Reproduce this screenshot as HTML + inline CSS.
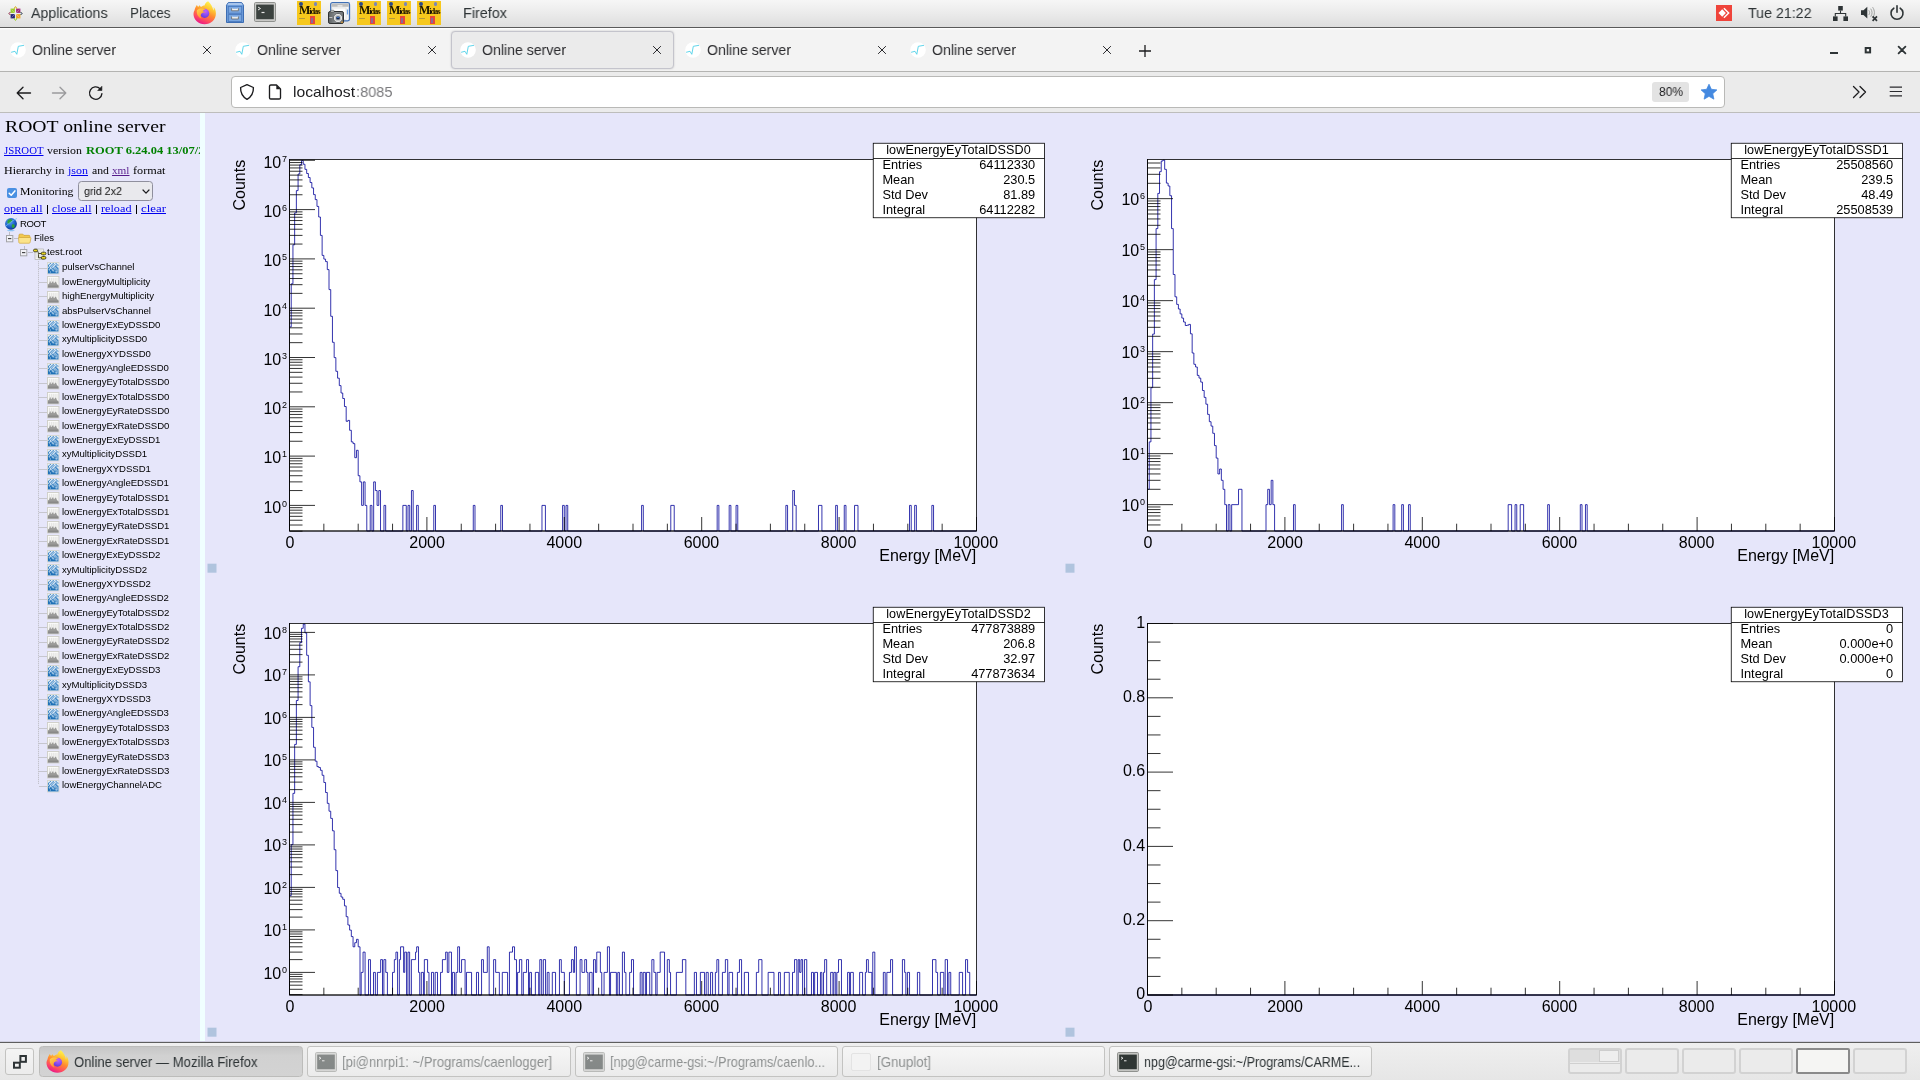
<!DOCTYPE html>
<html lang="en"><head><meta charset="utf-8"><title>Online server</title>
<style>
html,body{margin:0;padding:0;}
body{width:1920px;height:1080px;overflow:hidden;position:relative;background:#e6e6fa;
font-family:"Liberation Sans",sans-serif;}
.b{position:absolute;}
.a{position:absolute;overflow:visible;}
.t{position:absolute;white-space:pre;will-change:transform;}
.ls{font-family:"Liberation Sans",sans-serif;}
.lf{font-family:"Liberation Serif",serif;}
.lm{font-family:"Liberation Mono",monospace;}
</style></head><body>
<!-- content area -->
<div class="b" style="left:204.50px;top:113.00px;width:1715.50px;height:928.00px;background:#e6e6fa"></div>
<div class="b" style="left:0.00px;top:113.00px;width:200.00px;height:928.00px;background:#e6e6fa"></div>
<div class="b" style="left:200.00px;top:113.00px;width:4.50px;height:928.00px;background:#f0ffff"></div>
<div class="b" style="left:0;top:113px;width:200px;height:928px;overflow:hidden">
<span class="t lf" style="left:4.60px;top:5.16px;font-size:17.60px;line-height:17.60px;color:#000;transform:scaleX(1.1194);transform-origin:0 50%;">ROOT online server</span>
<span class="t lf" style="left:3.80px;top:32.62px;font-size:10.60px;line-height:10.60px;color:#0000ee;transform:scaleX(1.0161);transform-origin:0 50%;text-decoration:underline;text-decoration-thickness:0.8px;text-underline-offset:1.2px;">JSROOT</span>
<span class="t lf" style="left:47.00px;top:32.62px;font-size:10.60px;line-height:10.60px;color:#000;transform:scaleX(1.1216);transform-origin:0 50%;">version</span>
<span class="t lf" style="left:86.00px;top:32.62px;font-size:10.60px;line-height:10.60px;color:#008000;transform:scaleX(1.1789);transform-origin:0 50%;font-weight:700;">ROOT 6.24.04 13/07/2</span>
<span class="t lf" style="left:4.30px;top:52.62px;font-size:10.60px;line-height:10.60px;color:#000;transform:scaleX(1.1357);transform-origin:0 50%;">Hierarchy in</span>
<span class="t lf" style="left:67.80px;top:52.62px;font-size:10.60px;line-height:10.60px;color:#0000ee;transform:scaleX(1.1319);transform-origin:0 50%;text-decoration:underline;text-decoration-thickness:0.8px;text-underline-offset:1.2px;">json</span>
<span class="t lf" style="left:91.50px;top:52.62px;font-size:10.60px;line-height:10.60px;color:#000;transform:scaleX(1.1108);transform-origin:0 50%;">and</span>
<span class="t lf" style="left:112.00px;top:52.62px;font-size:10.60px;line-height:10.60px;color:#551a8b;transform:scaleX(1.0613);transform-origin:0 50%;text-decoration:underline;text-decoration-thickness:0.8px;text-underline-offset:1.2px;">xml</span>
<span class="t lf" style="left:133.00px;top:52.62px;font-size:10.60px;line-height:10.60px;color:#000;transform:scaleX(1.1503);transform-origin:0 50%;">format</span>
<div class="b" style="left:7.00px;top:74.60px;width:10.00px;height:10.00px;background:#4a90e2;border-radius:2px"></div>
<svg class="a" style="left:7px;top:74.60px" width="10" height="10" viewBox="0 0 10 10"><path d="M2.200 5.200l2 2 3.700-4.300" fill="none" stroke="#fff" stroke-width="1.500" stroke-linecap="round" stroke-linejoin="round"/></svg>
<span class="t lf" style="left:20.00px;top:73.72px;font-size:10.60px;line-height:10.60px;color:#000;transform:scaleX(1.1079);transform-origin:0 50%;">Monitoring</span>
<div class="b" style="left:78.20px;top:68.30px;width:74.70px;height:19.40px;background:#e9e9ed;border:1px solid #8f8f9d;border-radius:3.5px;box-sizing:border-box"></div>
<span class="t ls" style="left:84.00px;top:72.77px;font-size:11.50px;line-height:11.50px;color:#111;transform:scaleX(0.9288);transform-origin:0 50%;">grid 2x2</span>
<svg class="a" style="left:141.500px;top:75.50px" width="8" height="6" viewBox="0 0 8 6"><path d="M1 1l3 3.200 3-3.200" fill="none" stroke="#1c1c1e" stroke-width="1.200" stroke-linecap="round" stroke-linejoin="round"/></svg>
<span class="t lf" style="left:4.00px;top:90.72px;font-size:10.60px;line-height:10.60px;color:#0000ee;transform:scaleX(1.1374);transform-origin:0 50%;text-decoration:underline;text-decoration-thickness:0.8px;text-underline-offset:1.2px;">open all</span>
<div class="b" style="left:46.70px;top:91.80px;width:1.00px;height:9.20px;background:#000"></div>
<span class="t lf" style="left:52.00px;top:90.72px;font-size:10.60px;line-height:10.60px;color:#0000ee;transform:scaleX(1.1278);transform-origin:0 50%;text-decoration:underline;text-decoration-thickness:0.8px;text-underline-offset:1.2px;">close all</span>
<div class="b" style="left:95.70px;top:91.80px;width:1.00px;height:9.20px;background:#000"></div>
<span class="t lf" style="left:101.00px;top:90.72px;font-size:10.60px;line-height:10.60px;color:#0000ee;transform:scaleX(1.1516);transform-origin:0 50%;text-decoration:underline;text-decoration-thickness:0.8px;text-underline-offset:1.2px;">reload</span>
<div class="b" style="left:135.70px;top:91.80px;width:1.00px;height:9.20px;background:#000"></div>
<span class="t lf" style="left:141.00px;top:90.72px;font-size:10.60px;line-height:10.60px;color:#0000ee;transform:scaleX(1.2142);transform-origin:0 50%;text-decoration:underline;text-decoration-thickness:0.8px;text-underline-offset:1.2px;">clear</span>
<svg class="a" style="left:4px;top:103.50px" width="14" height="15" viewBox="0 0 14 15"><defs><radialGradient id="glb" cx="0.4" cy="0.35" r="0.7"><stop offset="0" stop-color="#5aa7f2"/><stop offset="0.6" stop-color="#1c5fc9"/><stop offset="1" stop-color="#0b2f8a"/></radialGradient></defs><ellipse cx="6.800" cy="13.600" rx="4" ry="0.700" fill="#6ab6f5" opacity="0.800"/><circle cx="7" cy="6.800" r="5.900" fill="url(#glb)"/><path d="M4.500 2.500c1.500-1 3-0.500 3.500 0.500s-0.500 2-1.500 2.500S5.500 7.500 4.500 7 3 5 3.500 4zM8 7.500c1-0.500 2.500 0 2.800 1s-0.800 2.500-1.800 2.500S7.500 9.500 8 7.500z" fill="#2fa33a"/><path d="M1.500 9.500C4 7 9 3 13 1.500" fill="none" stroke="#7cc4f7" stroke-width="0.800" opacity="0.900"/></svg>
<span class="t ls" style="left:19.80px;top:105.77px;font-size:9.60px;line-height:9.60px;color:#000;letter-spacing:-0.410px;">ROOT</span>
<div class="b" style="left:9.30px;top:118.50px;width:1.00px;height:4.00px;background:#bcbcc6"></div>
<div class="b" style="left:13.50px;top:125.30px;width:5.00px;height:1.00px;background:#bcbcc6"></div>
<svg class="a" style="left:6.00px;top:122.00px" width="8" height="8" viewBox="0 0 8 8"><rect x="0.500" y="0.500" width="6.300" height="6.300" fill="#f1f1f6" stroke="#a4a4a8" stroke-width="1"/><path d="M2 3.650h3.300" stroke="#111" stroke-width="0.900"/></svg>
<svg class="a" style="left:18px;top:120.00px" width="13" height="11.200" viewBox="0 0 14 12"><path d="M1 2.200c0-0.600 0.400-1 1-1h3.200l1.200 1.300h5.400c0.600 0 1 0.400 1 1V5H1z" fill="#f3c94e" stroke="#c99a27" stroke-width="0.700"/><path d="M0.600 4.800h12.600c0.500 0 0.800 0.400 0.700 0.800l-0.900 4.600c-0.100 0.500-0.500 0.800-1 0.800H1.900c-0.500 0-0.900-0.300-1-0.800z" fill="#fbe38a" stroke="#d1a431" stroke-width="0.700"/></svg>
<span class="t ls" style="left:34.00px;top:119.67px;font-size:9.60px;line-height:9.60px;color:#000;letter-spacing:-0.067px;">Files</span>
<div class="b" style="left:24.00px;top:132.50px;width:1.00px;height:3.50px;background:#bcbcc6"></div>
<div class="b" style="left:28.00px;top:139.30px;width:5.00px;height:1.00px;background:#bcbcc6"></div>
<svg class="a" style="left:20.30px;top:136.00px" width="8" height="8" viewBox="0 0 8 8"><rect x="0.500" y="0.500" width="6.300" height="6.300" fill="#f1f1f6" stroke="#a4a4a8" stroke-width="1"/><path d="M2 3.650h3.300" stroke="#111" stroke-width="0.900"/></svg>
<svg class="a" style="left:33px;top:134.70px" width="14" height="13" viewBox="0 0 14 13"><rect x="2" y="1" width="8.500" height="10.500" fill="#f3f3f0" stroke="#a8a8a4" stroke-width="0.600"/><path d="M3 3h6M3 5h6M3 7h6M3 9h6" stroke="#cfcfcb" stroke-width="0.600"/><path d="M2.500 2.500c3 0 3 3 3 4.500v2.800h4M5.500 5.500h4" fill="none" stroke="#3a3a20" stroke-width="0.900"/><rect x="0.500" y="1.200" width="4" height="2.600" rx="1.200" fill="#e9d51f" stroke="#2a2a10" stroke-width="0.800"/><rect x="8.300" y="4.200" width="4.600" height="2.600" rx="1.200" fill="#e9d51f" stroke="#2a2a10" stroke-width="0.800"/><rect x="8.300" y="8.500" width="4.600" height="2.600" rx="1.200" fill="#e9d51f" stroke="#2a2a10" stroke-width="0.800"/></svg>
<span class="t ls" style="left:47.00px;top:134.27px;font-size:9.60px;line-height:9.60px;color:#000;letter-spacing:0.040px;">test.root</span>
<div class="b" style="left:38.00px;top:147.50px;width:1.00px;height:523.50px;background:repeating-linear-gradient(#c2c2cc 0,#c2c2cc 1px,#dcdcec 1px,#dcdcec 2px)"></div>
<div class="b" style="left:39.00px;top:154.70px;width:7.50px;height:1.00px;background:#c6c6ce"></div>
<svg class="a" style="left:47.00px;top:149.00px" width="12.400" height="12.400" viewBox="0 0 13 13"><rect x="0.500" y="0.500" width="12" height="12" fill="#eef4fa" stroke="#d6d6ce" stroke-width="1"/><rect x="1" y="1" width="11" height="11" fill="#e4eef8"/><path d="M3 1h1v1h-1zM6 1h1v1h-1zM9 1h1v1h-1zM2 2h1v1h-1zM5 2h1v1h-1zM7 2h1v1h-1zM10 2h1v1h-1zM1 3h1v1h-1zM4 3h1v1h-1zM6 3h1v1h-1zM9 3h1v1h-1zM11 3h1v1h-1zM1 4h1v1h-1zM3 4h1v1h-1zM5 4h1v1h-1zM8 4h1v1h-1zM9 4h1v1h-1zM2 5h1v1h-1zM4 5h1v1h-1zM7 5h1v1h-1zM9 5h1v1h-1zM10 5h1v1h-1zM1 6h1v1h-1zM2 6h1v1h-1zM5 6h1v1h-1zM6 6h1v1h-1zM8 6h1v1h-1zM10 6h1v1h-1zM11 6h1v1h-1zM1 7h1v1h-1zM3 7h1v1h-1zM4 7h1v1h-1zM6 7h1v1h-1zM7 7h1v1h-1zM9 7h1v1h-1zM11 7h1v1h-1z" fill="#2d7cc0"/><rect x="1" y="8" width="11" height="4" fill="#1e70b6"/><path d="M2 8h1v1h-1zM5 8h2v1h-2zM8 9h1v1h-1zM10 8h1v2h-1zM9 10h2v1h-2zM3 10h1v1h-1zM6 9h1v1h-1z" fill="#cfe3f4"/></svg>
<span class="t ls" style="left:61.50px;top:149.37px;font-size:9.60px;line-height:9.60px;color:#000;letter-spacing:-0.042px;">pulserVsChannel</span>
<div class="b" style="left:39.00px;top:169.09px;width:7.50px;height:1.00px;background:#c6c6ce"></div>
<svg class="a" style="left:47.00px;top:163.39px" width="12.400" height="12.400" viewBox="0 0 13 13"><rect x="0.500" y="0.500" width="12" height="12" fill="#fbfbfa" stroke="#cfcfc9" stroke-width="1"/><path d="M2.500 2v6M4.500 2v5M6.500 2v6M8.500 2v5M10.500 2v6" stroke="#dcdcd8" stroke-width="0.900"/><path d="M1 12V9L2.300 7.800 3.300 5 4.300 7.600 5.300 6.600 6.300 5.200 7.300 7.800 8.300 6.500 9.300 5.800 10.300 8.200 12 10V12z" fill="#9a9a98"/><rect x="1" y="10" width="11" height="2" fill="#8a8a88"/></svg>
<span class="t ls" style="left:61.50px;top:163.76px;font-size:9.60px;line-height:9.60px;color:#000;letter-spacing:-0.036px;">lowEnergyMultiplicity</span>
<div class="b" style="left:39.00px;top:183.48px;width:7.50px;height:1.00px;background:#c6c6ce"></div>
<svg class="a" style="left:47.00px;top:177.78px" width="12.400" height="12.400" viewBox="0 0 13 13"><rect x="0.500" y="0.500" width="12" height="12" fill="#fbfbfa" stroke="#cfcfc9" stroke-width="1"/><path d="M2.500 2v6M4.500 2v5M6.500 2v6M8.500 2v5M10.500 2v6" stroke="#dcdcd8" stroke-width="0.900"/><path d="M1 12V9L2.300 7.800 3.300 5 4.300 7.600 5.300 6.600 6.300 5.200 7.300 7.800 8.300 6.500 9.300 5.800 10.300 8.200 12 10V12z" fill="#9a9a98"/><rect x="1" y="10" width="11" height="2" fill="#8a8a88"/></svg>
<span class="t ls" style="left:61.50px;top:178.15px;font-size:9.60px;line-height:9.60px;color:#000;letter-spacing:-0.035px;">highEnergyMultiplicity</span>
<div class="b" style="left:39.00px;top:197.87px;width:7.50px;height:1.00px;background:#c6c6ce"></div>
<svg class="a" style="left:47.00px;top:192.17px" width="12.400" height="12.400" viewBox="0 0 13 13"><rect x="0.500" y="0.500" width="12" height="12" fill="#eef4fa" stroke="#d6d6ce" stroke-width="1"/><rect x="1" y="1" width="11" height="11" fill="#e4eef8"/><path d="M3 1h1v1h-1zM6 1h1v1h-1zM9 1h1v1h-1zM2 2h1v1h-1zM5 2h1v1h-1zM7 2h1v1h-1zM10 2h1v1h-1zM1 3h1v1h-1zM4 3h1v1h-1zM6 3h1v1h-1zM9 3h1v1h-1zM11 3h1v1h-1zM1 4h1v1h-1zM3 4h1v1h-1zM5 4h1v1h-1zM8 4h1v1h-1zM9 4h1v1h-1zM2 5h1v1h-1zM4 5h1v1h-1zM7 5h1v1h-1zM9 5h1v1h-1zM10 5h1v1h-1zM1 6h1v1h-1zM2 6h1v1h-1zM5 6h1v1h-1zM6 6h1v1h-1zM8 6h1v1h-1zM10 6h1v1h-1zM11 6h1v1h-1zM1 7h1v1h-1zM3 7h1v1h-1zM4 7h1v1h-1zM6 7h1v1h-1zM7 7h1v1h-1zM9 7h1v1h-1zM11 7h1v1h-1z" fill="#2d7cc0"/><rect x="1" y="8" width="11" height="4" fill="#1e70b6"/><path d="M2 8h1v1h-1zM5 8h2v1h-2zM8 9h1v1h-1zM10 8h1v2h-1zM9 10h2v1h-2zM3 10h1v1h-1zM6 9h1v1h-1z" fill="#cfe3f4"/></svg>
<span class="t ls" style="left:61.50px;top:192.54px;font-size:9.60px;line-height:9.60px;color:#000;letter-spacing:-0.042px;">absPulserVsChannel</span>
<div class="b" style="left:39.00px;top:212.26px;width:7.50px;height:1.00px;background:#c6c6ce"></div>
<svg class="a" style="left:47.00px;top:206.56px" width="12.400" height="12.400" viewBox="0 0 13 13"><rect x="0.500" y="0.500" width="12" height="12" fill="#eef4fa" stroke="#d6d6ce" stroke-width="1"/><rect x="1" y="1" width="11" height="11" fill="#e4eef8"/><path d="M3 1h1v1h-1zM6 1h1v1h-1zM9 1h1v1h-1zM2 2h1v1h-1zM5 2h1v1h-1zM7 2h1v1h-1zM10 2h1v1h-1zM1 3h1v1h-1zM4 3h1v1h-1zM6 3h1v1h-1zM9 3h1v1h-1zM11 3h1v1h-1zM1 4h1v1h-1zM3 4h1v1h-1zM5 4h1v1h-1zM8 4h1v1h-1zM9 4h1v1h-1zM2 5h1v1h-1zM4 5h1v1h-1zM7 5h1v1h-1zM9 5h1v1h-1zM10 5h1v1h-1zM1 6h1v1h-1zM2 6h1v1h-1zM5 6h1v1h-1zM6 6h1v1h-1zM8 6h1v1h-1zM10 6h1v1h-1zM11 6h1v1h-1zM1 7h1v1h-1zM3 7h1v1h-1zM4 7h1v1h-1zM6 7h1v1h-1zM7 7h1v1h-1zM9 7h1v1h-1zM11 7h1v1h-1z" fill="#2d7cc0"/><rect x="1" y="8" width="11" height="4" fill="#1e70b6"/><path d="M2 8h1v1h-1zM5 8h2v1h-2zM8 9h1v1h-1zM10 8h1v2h-1zM9 10h2v1h-2zM3 10h1v1h-1zM6 9h1v1h-1z" fill="#cfe3f4"/></svg>
<span class="t ls" style="left:61.50px;top:206.93px;font-size:9.60px;line-height:9.60px;color:#000;letter-spacing:-0.047px;">lowEnergyExEyDSSD0</span>
<div class="b" style="left:39.00px;top:226.64px;width:7.50px;height:1.00px;background:#c6c6ce"></div>
<svg class="a" style="left:47.00px;top:220.94px" width="12.400" height="12.400" viewBox="0 0 13 13"><rect x="0.500" y="0.500" width="12" height="12" fill="#eef4fa" stroke="#d6d6ce" stroke-width="1"/><rect x="1" y="1" width="11" height="11" fill="#e4eef8"/><path d="M3 1h1v1h-1zM6 1h1v1h-1zM9 1h1v1h-1zM2 2h1v1h-1zM5 2h1v1h-1zM7 2h1v1h-1zM10 2h1v1h-1zM1 3h1v1h-1zM4 3h1v1h-1zM6 3h1v1h-1zM9 3h1v1h-1zM11 3h1v1h-1zM1 4h1v1h-1zM3 4h1v1h-1zM5 4h1v1h-1zM8 4h1v1h-1zM9 4h1v1h-1zM2 5h1v1h-1zM4 5h1v1h-1zM7 5h1v1h-1zM9 5h1v1h-1zM10 5h1v1h-1zM1 6h1v1h-1zM2 6h1v1h-1zM5 6h1v1h-1zM6 6h1v1h-1zM8 6h1v1h-1zM10 6h1v1h-1zM11 6h1v1h-1zM1 7h1v1h-1zM3 7h1v1h-1zM4 7h1v1h-1zM6 7h1v1h-1zM7 7h1v1h-1zM9 7h1v1h-1zM11 7h1v1h-1z" fill="#2d7cc0"/><rect x="1" y="8" width="11" height="4" fill="#1e70b6"/><path d="M2 8h1v1h-1zM5 8h2v1h-2zM8 9h1v1h-1zM10 8h1v2h-1zM9 10h2v1h-2zM3 10h1v1h-1zM6 9h1v1h-1z" fill="#cfe3f4"/></svg>
<span class="t ls" style="left:61.50px;top:221.32px;font-size:9.60px;line-height:9.60px;color:#000;letter-spacing:-0.038px;">xyMultiplicityDSSD0</span>
<div class="b" style="left:39.00px;top:241.03px;width:7.50px;height:1.00px;background:#c6c6ce"></div>
<svg class="a" style="left:47.00px;top:235.33px" width="12.400" height="12.400" viewBox="0 0 13 13"><rect x="0.500" y="0.500" width="12" height="12" fill="#eef4fa" stroke="#d6d6ce" stroke-width="1"/><rect x="1" y="1" width="11" height="11" fill="#e4eef8"/><path d="M3 1h1v1h-1zM6 1h1v1h-1zM9 1h1v1h-1zM2 2h1v1h-1zM5 2h1v1h-1zM7 2h1v1h-1zM10 2h1v1h-1zM1 3h1v1h-1zM4 3h1v1h-1zM6 3h1v1h-1zM9 3h1v1h-1zM11 3h1v1h-1zM1 4h1v1h-1zM3 4h1v1h-1zM5 4h1v1h-1zM8 4h1v1h-1zM9 4h1v1h-1zM2 5h1v1h-1zM4 5h1v1h-1zM7 5h1v1h-1zM9 5h1v1h-1zM10 5h1v1h-1zM1 6h1v1h-1zM2 6h1v1h-1zM5 6h1v1h-1zM6 6h1v1h-1zM8 6h1v1h-1zM10 6h1v1h-1zM11 6h1v1h-1zM1 7h1v1h-1zM3 7h1v1h-1zM4 7h1v1h-1zM6 7h1v1h-1zM7 7h1v1h-1zM9 7h1v1h-1zM11 7h1v1h-1z" fill="#2d7cc0"/><rect x="1" y="8" width="11" height="4" fill="#1e70b6"/><path d="M2 8h1v1h-1zM5 8h2v1h-2zM8 9h1v1h-1zM10 8h1v2h-1zM9 10h2v1h-2zM3 10h1v1h-1zM6 9h1v1h-1z" fill="#cfe3f4"/></svg>
<span class="t ls" style="left:61.50px;top:235.71px;font-size:9.60px;line-height:9.60px;color:#000;letter-spacing:-0.048px;">lowEnergyXYDSSD0</span>
<div class="b" style="left:39.00px;top:255.42px;width:7.50px;height:1.00px;background:#c6c6ce"></div>
<svg class="a" style="left:47.00px;top:249.72px" width="12.400" height="12.400" viewBox="0 0 13 13"><rect x="0.500" y="0.500" width="12" height="12" fill="#eef4fa" stroke="#d6d6ce" stroke-width="1"/><rect x="1" y="1" width="11" height="11" fill="#e4eef8"/><path d="M3 1h1v1h-1zM6 1h1v1h-1zM9 1h1v1h-1zM2 2h1v1h-1zM5 2h1v1h-1zM7 2h1v1h-1zM10 2h1v1h-1zM1 3h1v1h-1zM4 3h1v1h-1zM6 3h1v1h-1zM9 3h1v1h-1zM11 3h1v1h-1zM1 4h1v1h-1zM3 4h1v1h-1zM5 4h1v1h-1zM8 4h1v1h-1zM9 4h1v1h-1zM2 5h1v1h-1zM4 5h1v1h-1zM7 5h1v1h-1zM9 5h1v1h-1zM10 5h1v1h-1zM1 6h1v1h-1zM2 6h1v1h-1zM5 6h1v1h-1zM6 6h1v1h-1zM8 6h1v1h-1zM10 6h1v1h-1zM11 6h1v1h-1zM1 7h1v1h-1zM3 7h1v1h-1zM4 7h1v1h-1zM6 7h1v1h-1zM7 7h1v1h-1zM9 7h1v1h-1zM11 7h1v1h-1z" fill="#2d7cc0"/><rect x="1" y="8" width="11" height="4" fill="#1e70b6"/><path d="M2 8h1v1h-1zM5 8h2v1h-2zM8 9h1v1h-1zM10 8h1v2h-1zM9 10h2v1h-2zM3 10h1v1h-1zM6 9h1v1h-1z" fill="#cfe3f4"/></svg>
<span class="t ls" style="left:61.50px;top:250.10px;font-size:9.60px;line-height:9.60px;color:#000;letter-spacing:-0.045px;">lowEnergyAngleEDSSD0</span>
<div class="b" style="left:39.00px;top:269.81px;width:7.50px;height:1.00px;background:#c6c6ce"></div>
<svg class="a" style="left:47.00px;top:264.11px" width="12.400" height="12.400" viewBox="0 0 13 13"><rect x="0.500" y="0.500" width="12" height="12" fill="#fbfbfa" stroke="#cfcfc9" stroke-width="1"/><path d="M2.500 2v6M4.500 2v5M6.500 2v6M8.500 2v5M10.500 2v6" stroke="#dcdcd8" stroke-width="0.900"/><path d="M1 12V9L2.300 7.800 3.300 5 4.300 7.600 5.300 6.600 6.300 5.200 7.300 7.800 8.300 6.500 9.300 5.800 10.300 8.200 12 10V12z" fill="#9a9a98"/><rect x="1" y="10" width="11" height="2" fill="#8a8a88"/></svg>
<span class="t ls" style="left:61.50px;top:264.48px;font-size:9.60px;line-height:9.60px;color:#000;letter-spacing:-0.043px;">lowEnergyEyTotalDSSD0</span>
<div class="b" style="left:39.00px;top:284.20px;width:7.50px;height:1.00px;background:#c6c6ce"></div>
<svg class="a" style="left:47.00px;top:278.50px" width="12.400" height="12.400" viewBox="0 0 13 13"><rect x="0.500" y="0.500" width="12" height="12" fill="#fbfbfa" stroke="#cfcfc9" stroke-width="1"/><path d="M2.500 2v6M4.500 2v5M6.500 2v6M8.500 2v5M10.500 2v6" stroke="#dcdcd8" stroke-width="0.900"/><path d="M1 12V9L2.300 7.800 3.300 5 4.300 7.600 5.300 6.600 6.300 5.200 7.300 7.800 8.300 6.500 9.300 5.800 10.300 8.200 12 10V12z" fill="#9a9a98"/><rect x="1" y="10" width="11" height="2" fill="#8a8a88"/></svg>
<span class="t ls" style="left:61.50px;top:278.87px;font-size:9.60px;line-height:9.60px;color:#000;letter-spacing:-0.043px;">lowEnergyExTotalDSSD0</span>
<div class="b" style="left:39.00px;top:298.59px;width:7.50px;height:1.00px;background:#c6c6ce"></div>
<svg class="a" style="left:47.00px;top:292.89px" width="12.400" height="12.400" viewBox="0 0 13 13"><rect x="0.500" y="0.500" width="12" height="12" fill="#fbfbfa" stroke="#cfcfc9" stroke-width="1"/><path d="M2.500 2v6M4.500 2v5M6.500 2v6M8.500 2v5M10.500 2v6" stroke="#dcdcd8" stroke-width="0.900"/><path d="M1 12V9L2.300 7.800 3.300 5 4.300 7.600 5.300 6.600 6.300 5.200 7.300 7.800 8.300 6.500 9.300 5.800 10.300 8.200 12 10V12z" fill="#9a9a98"/><rect x="1" y="10" width="11" height="2" fill="#8a8a88"/></svg>
<span class="t ls" style="left:61.50px;top:293.26px;font-size:9.60px;line-height:9.60px;color:#000;letter-spacing:-0.046px;">lowEnergyEyRateDSSD0</span>
<div class="b" style="left:39.00px;top:312.98px;width:7.50px;height:1.00px;background:#c6c6ce"></div>
<svg class="a" style="left:47.00px;top:307.28px" width="12.400" height="12.400" viewBox="0 0 13 13"><rect x="0.500" y="0.500" width="12" height="12" fill="#fbfbfa" stroke="#cfcfc9" stroke-width="1"/><path d="M2.500 2v6M4.500 2v5M6.500 2v6M8.500 2v5M10.500 2v6" stroke="#dcdcd8" stroke-width="0.900"/><path d="M1 12V9L2.300 7.800 3.300 5 4.300 7.600 5.300 6.600 6.300 5.200 7.300 7.800 8.300 6.500 9.300 5.800 10.300 8.200 12 10V12z" fill="#9a9a98"/><rect x="1" y="10" width="11" height="2" fill="#8a8a88"/></svg>
<span class="t ls" style="left:61.50px;top:307.65px;font-size:9.60px;line-height:9.60px;color:#000;letter-spacing:-0.046px;">lowEnergyExRateDSSD0</span>
<div class="b" style="left:39.00px;top:327.37px;width:7.50px;height:1.00px;background:#c6c6ce"></div>
<svg class="a" style="left:47.00px;top:321.67px" width="12.400" height="12.400" viewBox="0 0 13 13"><rect x="0.500" y="0.500" width="12" height="12" fill="#eef4fa" stroke="#d6d6ce" stroke-width="1"/><rect x="1" y="1" width="11" height="11" fill="#e4eef8"/><path d="M3 1h1v1h-1zM6 1h1v1h-1zM9 1h1v1h-1zM2 2h1v1h-1zM5 2h1v1h-1zM7 2h1v1h-1zM10 2h1v1h-1zM1 3h1v1h-1zM4 3h1v1h-1zM6 3h1v1h-1zM9 3h1v1h-1zM11 3h1v1h-1zM1 4h1v1h-1zM3 4h1v1h-1zM5 4h1v1h-1zM8 4h1v1h-1zM9 4h1v1h-1zM2 5h1v1h-1zM4 5h1v1h-1zM7 5h1v1h-1zM9 5h1v1h-1zM10 5h1v1h-1zM1 6h1v1h-1zM2 6h1v1h-1zM5 6h1v1h-1zM6 6h1v1h-1zM8 6h1v1h-1zM10 6h1v1h-1zM11 6h1v1h-1zM1 7h1v1h-1zM3 7h1v1h-1zM4 7h1v1h-1zM6 7h1v1h-1zM7 7h1v1h-1zM9 7h1v1h-1zM11 7h1v1h-1z" fill="#2d7cc0"/><rect x="1" y="8" width="11" height="4" fill="#1e70b6"/><path d="M2 8h1v1h-1zM5 8h2v1h-2zM8 9h1v1h-1zM10 8h1v2h-1zM9 10h2v1h-2zM3 10h1v1h-1zM6 9h1v1h-1z" fill="#cfe3f4"/></svg>
<span class="t ls" style="left:61.50px;top:322.04px;font-size:9.60px;line-height:9.60px;color:#000;letter-spacing:-0.047px;">lowEnergyExEyDSSD1</span>
<div class="b" style="left:39.00px;top:341.76px;width:7.50px;height:1.00px;background:#c6c6ce"></div>
<svg class="a" style="left:47.00px;top:336.06px" width="12.400" height="12.400" viewBox="0 0 13 13"><rect x="0.500" y="0.500" width="12" height="12" fill="#eef4fa" stroke="#d6d6ce" stroke-width="1"/><rect x="1" y="1" width="11" height="11" fill="#e4eef8"/><path d="M3 1h1v1h-1zM6 1h1v1h-1zM9 1h1v1h-1zM2 2h1v1h-1zM5 2h1v1h-1zM7 2h1v1h-1zM10 2h1v1h-1zM1 3h1v1h-1zM4 3h1v1h-1zM6 3h1v1h-1zM9 3h1v1h-1zM11 3h1v1h-1zM1 4h1v1h-1zM3 4h1v1h-1zM5 4h1v1h-1zM8 4h1v1h-1zM9 4h1v1h-1zM2 5h1v1h-1zM4 5h1v1h-1zM7 5h1v1h-1zM9 5h1v1h-1zM10 5h1v1h-1zM1 6h1v1h-1zM2 6h1v1h-1zM5 6h1v1h-1zM6 6h1v1h-1zM8 6h1v1h-1zM10 6h1v1h-1zM11 6h1v1h-1zM1 7h1v1h-1zM3 7h1v1h-1zM4 7h1v1h-1zM6 7h1v1h-1zM7 7h1v1h-1zM9 7h1v1h-1zM11 7h1v1h-1z" fill="#2d7cc0"/><rect x="1" y="8" width="11" height="4" fill="#1e70b6"/><path d="M2 8h1v1h-1zM5 8h2v1h-2zM8 9h1v1h-1zM10 8h1v2h-1zM9 10h2v1h-2zM3 10h1v1h-1zM6 9h1v1h-1z" fill="#cfe3f4"/></svg>
<span class="t ls" style="left:61.50px;top:336.43px;font-size:9.60px;line-height:9.60px;color:#000;letter-spacing:-0.038px;">xyMultiplicityDSSD1</span>
<div class="b" style="left:39.00px;top:356.14px;width:7.50px;height:1.00px;background:#c6c6ce"></div>
<svg class="a" style="left:47.00px;top:350.44px" width="12.400" height="12.400" viewBox="0 0 13 13"><rect x="0.500" y="0.500" width="12" height="12" fill="#eef4fa" stroke="#d6d6ce" stroke-width="1"/><rect x="1" y="1" width="11" height="11" fill="#e4eef8"/><path d="M3 1h1v1h-1zM6 1h1v1h-1zM9 1h1v1h-1zM2 2h1v1h-1zM5 2h1v1h-1zM7 2h1v1h-1zM10 2h1v1h-1zM1 3h1v1h-1zM4 3h1v1h-1zM6 3h1v1h-1zM9 3h1v1h-1zM11 3h1v1h-1zM1 4h1v1h-1zM3 4h1v1h-1zM5 4h1v1h-1zM8 4h1v1h-1zM9 4h1v1h-1zM2 5h1v1h-1zM4 5h1v1h-1zM7 5h1v1h-1zM9 5h1v1h-1zM10 5h1v1h-1zM1 6h1v1h-1zM2 6h1v1h-1zM5 6h1v1h-1zM6 6h1v1h-1zM8 6h1v1h-1zM10 6h1v1h-1zM11 6h1v1h-1zM1 7h1v1h-1zM3 7h1v1h-1zM4 7h1v1h-1zM6 7h1v1h-1zM7 7h1v1h-1zM9 7h1v1h-1zM11 7h1v1h-1z" fill="#2d7cc0"/><rect x="1" y="8" width="11" height="4" fill="#1e70b6"/><path d="M2 8h1v1h-1zM5 8h2v1h-2zM8 9h1v1h-1zM10 8h1v2h-1zM9 10h2v1h-2zM3 10h1v1h-1zM6 9h1v1h-1z" fill="#cfe3f4"/></svg>
<span class="t ls" style="left:61.50px;top:350.82px;font-size:9.60px;line-height:9.60px;color:#000;letter-spacing:-0.048px;">lowEnergyXYDSSD1</span>
<div class="b" style="left:39.00px;top:370.53px;width:7.50px;height:1.00px;background:#c6c6ce"></div>
<svg class="a" style="left:47.00px;top:364.83px" width="12.400" height="12.400" viewBox="0 0 13 13"><rect x="0.500" y="0.500" width="12" height="12" fill="#eef4fa" stroke="#d6d6ce" stroke-width="1"/><rect x="1" y="1" width="11" height="11" fill="#e4eef8"/><path d="M3 1h1v1h-1zM6 1h1v1h-1zM9 1h1v1h-1zM2 2h1v1h-1zM5 2h1v1h-1zM7 2h1v1h-1zM10 2h1v1h-1zM1 3h1v1h-1zM4 3h1v1h-1zM6 3h1v1h-1zM9 3h1v1h-1zM11 3h1v1h-1zM1 4h1v1h-1zM3 4h1v1h-1zM5 4h1v1h-1zM8 4h1v1h-1zM9 4h1v1h-1zM2 5h1v1h-1zM4 5h1v1h-1zM7 5h1v1h-1zM9 5h1v1h-1zM10 5h1v1h-1zM1 6h1v1h-1zM2 6h1v1h-1zM5 6h1v1h-1zM6 6h1v1h-1zM8 6h1v1h-1zM10 6h1v1h-1zM11 6h1v1h-1zM1 7h1v1h-1zM3 7h1v1h-1zM4 7h1v1h-1zM6 7h1v1h-1zM7 7h1v1h-1zM9 7h1v1h-1zM11 7h1v1h-1z" fill="#2d7cc0"/><rect x="1" y="8" width="11" height="4" fill="#1e70b6"/><path d="M2 8h1v1h-1zM5 8h2v1h-2zM8 9h1v1h-1zM10 8h1v2h-1zM9 10h2v1h-2zM3 10h1v1h-1zM6 9h1v1h-1z" fill="#cfe3f4"/></svg>
<span class="t ls" style="left:61.50px;top:365.21px;font-size:9.60px;line-height:9.60px;color:#000;letter-spacing:-0.045px;">lowEnergyAngleEDSSD1</span>
<div class="b" style="left:39.00px;top:384.92px;width:7.50px;height:1.00px;background:#c6c6ce"></div>
<svg class="a" style="left:47.00px;top:379.22px" width="12.400" height="12.400" viewBox="0 0 13 13"><rect x="0.500" y="0.500" width="12" height="12" fill="#fbfbfa" stroke="#cfcfc9" stroke-width="1"/><path d="M2.500 2v6M4.500 2v5M6.500 2v6M8.500 2v5M10.500 2v6" stroke="#dcdcd8" stroke-width="0.900"/><path d="M1 12V9L2.300 7.800 3.300 5 4.300 7.600 5.300 6.600 6.300 5.200 7.300 7.800 8.300 6.500 9.300 5.800 10.300 8.200 12 10V12z" fill="#9a9a98"/><rect x="1" y="10" width="11" height="2" fill="#8a8a88"/></svg>
<span class="t ls" style="left:61.50px;top:379.60px;font-size:9.60px;line-height:9.60px;color:#000;letter-spacing:-0.043px;">lowEnergyEyTotalDSSD1</span>
<div class="b" style="left:39.00px;top:399.31px;width:7.50px;height:1.00px;background:#c6c6ce"></div>
<svg class="a" style="left:47.00px;top:393.61px" width="12.400" height="12.400" viewBox="0 0 13 13"><rect x="0.500" y="0.500" width="12" height="12" fill="#fbfbfa" stroke="#cfcfc9" stroke-width="1"/><path d="M2.500 2v6M4.500 2v5M6.500 2v6M8.500 2v5M10.500 2v6" stroke="#dcdcd8" stroke-width="0.900"/><path d="M1 12V9L2.300 7.800 3.300 5 4.300 7.600 5.300 6.600 6.300 5.200 7.300 7.800 8.300 6.500 9.300 5.800 10.300 8.200 12 10V12z" fill="#9a9a98"/><rect x="1" y="10" width="11" height="2" fill="#8a8a88"/></svg>
<span class="t ls" style="left:61.50px;top:393.98px;font-size:9.60px;line-height:9.60px;color:#000;letter-spacing:-0.043px;">lowEnergyExTotalDSSD1</span>
<div class="b" style="left:39.00px;top:413.70px;width:7.50px;height:1.00px;background:#c6c6ce"></div>
<svg class="a" style="left:47.00px;top:408.00px" width="12.400" height="12.400" viewBox="0 0 13 13"><rect x="0.500" y="0.500" width="12" height="12" fill="#fbfbfa" stroke="#cfcfc9" stroke-width="1"/><path d="M2.500 2v6M4.500 2v5M6.500 2v6M8.500 2v5M10.500 2v6" stroke="#dcdcd8" stroke-width="0.900"/><path d="M1 12V9L2.300 7.800 3.300 5 4.300 7.600 5.300 6.600 6.300 5.200 7.300 7.800 8.300 6.500 9.300 5.800 10.300 8.200 12 10V12z" fill="#9a9a98"/><rect x="1" y="10" width="11" height="2" fill="#8a8a88"/></svg>
<span class="t ls" style="left:61.50px;top:408.37px;font-size:9.60px;line-height:9.60px;color:#000;letter-spacing:-0.046px;">lowEnergyEyRateDSSD1</span>
<div class="b" style="left:39.00px;top:428.09px;width:7.50px;height:1.00px;background:#c6c6ce"></div>
<svg class="a" style="left:47.00px;top:422.39px" width="12.400" height="12.400" viewBox="0 0 13 13"><rect x="0.500" y="0.500" width="12" height="12" fill="#fbfbfa" stroke="#cfcfc9" stroke-width="1"/><path d="M2.500 2v6M4.500 2v5M6.500 2v6M8.500 2v5M10.500 2v6" stroke="#dcdcd8" stroke-width="0.900"/><path d="M1 12V9L2.300 7.800 3.300 5 4.300 7.600 5.300 6.600 6.300 5.200 7.300 7.800 8.300 6.500 9.300 5.800 10.300 8.200 12 10V12z" fill="#9a9a98"/><rect x="1" y="10" width="11" height="2" fill="#8a8a88"/></svg>
<span class="t ls" style="left:61.50px;top:422.76px;font-size:9.60px;line-height:9.60px;color:#000;letter-spacing:-0.046px;">lowEnergyExRateDSSD1</span>
<div class="b" style="left:39.00px;top:442.48px;width:7.50px;height:1.00px;background:#c6c6ce"></div>
<svg class="a" style="left:47.00px;top:436.78px" width="12.400" height="12.400" viewBox="0 0 13 13"><rect x="0.500" y="0.500" width="12" height="12" fill="#eef4fa" stroke="#d6d6ce" stroke-width="1"/><rect x="1" y="1" width="11" height="11" fill="#e4eef8"/><path d="M3 1h1v1h-1zM6 1h1v1h-1zM9 1h1v1h-1zM2 2h1v1h-1zM5 2h1v1h-1zM7 2h1v1h-1zM10 2h1v1h-1zM1 3h1v1h-1zM4 3h1v1h-1zM6 3h1v1h-1zM9 3h1v1h-1zM11 3h1v1h-1zM1 4h1v1h-1zM3 4h1v1h-1zM5 4h1v1h-1zM8 4h1v1h-1zM9 4h1v1h-1zM2 5h1v1h-1zM4 5h1v1h-1zM7 5h1v1h-1zM9 5h1v1h-1zM10 5h1v1h-1zM1 6h1v1h-1zM2 6h1v1h-1zM5 6h1v1h-1zM6 6h1v1h-1zM8 6h1v1h-1zM10 6h1v1h-1zM11 6h1v1h-1zM1 7h1v1h-1zM3 7h1v1h-1zM4 7h1v1h-1zM6 7h1v1h-1zM7 7h1v1h-1zM9 7h1v1h-1zM11 7h1v1h-1z" fill="#2d7cc0"/><rect x="1" y="8" width="11" height="4" fill="#1e70b6"/><path d="M2 8h1v1h-1zM5 8h2v1h-2zM8 9h1v1h-1zM10 8h1v2h-1zM9 10h2v1h-2zM3 10h1v1h-1zM6 9h1v1h-1z" fill="#cfe3f4"/></svg>
<span class="t ls" style="left:61.50px;top:437.15px;font-size:9.60px;line-height:9.60px;color:#000;letter-spacing:-0.047px;">lowEnergyExEyDSSD2</span>
<div class="b" style="left:39.00px;top:456.87px;width:7.50px;height:1.00px;background:#c6c6ce"></div>
<svg class="a" style="left:47.00px;top:451.17px" width="12.400" height="12.400" viewBox="0 0 13 13"><rect x="0.500" y="0.500" width="12" height="12" fill="#eef4fa" stroke="#d6d6ce" stroke-width="1"/><rect x="1" y="1" width="11" height="11" fill="#e4eef8"/><path d="M3 1h1v1h-1zM6 1h1v1h-1zM9 1h1v1h-1zM2 2h1v1h-1zM5 2h1v1h-1zM7 2h1v1h-1zM10 2h1v1h-1zM1 3h1v1h-1zM4 3h1v1h-1zM6 3h1v1h-1zM9 3h1v1h-1zM11 3h1v1h-1zM1 4h1v1h-1zM3 4h1v1h-1zM5 4h1v1h-1zM8 4h1v1h-1zM9 4h1v1h-1zM2 5h1v1h-1zM4 5h1v1h-1zM7 5h1v1h-1zM9 5h1v1h-1zM10 5h1v1h-1zM1 6h1v1h-1zM2 6h1v1h-1zM5 6h1v1h-1zM6 6h1v1h-1zM8 6h1v1h-1zM10 6h1v1h-1zM11 6h1v1h-1zM1 7h1v1h-1zM3 7h1v1h-1zM4 7h1v1h-1zM6 7h1v1h-1zM7 7h1v1h-1zM9 7h1v1h-1zM11 7h1v1h-1z" fill="#2d7cc0"/><rect x="1" y="8" width="11" height="4" fill="#1e70b6"/><path d="M2 8h1v1h-1zM5 8h2v1h-2zM8 9h1v1h-1zM10 8h1v2h-1zM9 10h2v1h-2zM3 10h1v1h-1zM6 9h1v1h-1z" fill="#cfe3f4"/></svg>
<span class="t ls" style="left:61.50px;top:451.54px;font-size:9.60px;line-height:9.60px;color:#000;letter-spacing:-0.038px;">xyMultiplicityDSSD2</span>
<div class="b" style="left:39.00px;top:471.26px;width:7.50px;height:1.00px;background:#c6c6ce"></div>
<svg class="a" style="left:47.00px;top:465.56px" width="12.400" height="12.400" viewBox="0 0 13 13"><rect x="0.500" y="0.500" width="12" height="12" fill="#eef4fa" stroke="#d6d6ce" stroke-width="1"/><rect x="1" y="1" width="11" height="11" fill="#e4eef8"/><path d="M3 1h1v1h-1zM6 1h1v1h-1zM9 1h1v1h-1zM2 2h1v1h-1zM5 2h1v1h-1zM7 2h1v1h-1zM10 2h1v1h-1zM1 3h1v1h-1zM4 3h1v1h-1zM6 3h1v1h-1zM9 3h1v1h-1zM11 3h1v1h-1zM1 4h1v1h-1zM3 4h1v1h-1zM5 4h1v1h-1zM8 4h1v1h-1zM9 4h1v1h-1zM2 5h1v1h-1zM4 5h1v1h-1zM7 5h1v1h-1zM9 5h1v1h-1zM10 5h1v1h-1zM1 6h1v1h-1zM2 6h1v1h-1zM5 6h1v1h-1zM6 6h1v1h-1zM8 6h1v1h-1zM10 6h1v1h-1zM11 6h1v1h-1zM1 7h1v1h-1zM3 7h1v1h-1zM4 7h1v1h-1zM6 7h1v1h-1zM7 7h1v1h-1zM9 7h1v1h-1zM11 7h1v1h-1z" fill="#2d7cc0"/><rect x="1" y="8" width="11" height="4" fill="#1e70b6"/><path d="M2 8h1v1h-1zM5 8h2v1h-2zM8 9h1v1h-1zM10 8h1v2h-1zM9 10h2v1h-2zM3 10h1v1h-1zM6 9h1v1h-1z" fill="#cfe3f4"/></svg>
<span class="t ls" style="left:61.50px;top:465.93px;font-size:9.60px;line-height:9.60px;color:#000;letter-spacing:-0.048px;">lowEnergyXYDSSD2</span>
<div class="b" style="left:39.00px;top:485.64px;width:7.50px;height:1.00px;background:#c6c6ce"></div>
<svg class="a" style="left:47.00px;top:479.94px" width="12.400" height="12.400" viewBox="0 0 13 13"><rect x="0.500" y="0.500" width="12" height="12" fill="#eef4fa" stroke="#d6d6ce" stroke-width="1"/><rect x="1" y="1" width="11" height="11" fill="#e4eef8"/><path d="M3 1h1v1h-1zM6 1h1v1h-1zM9 1h1v1h-1zM2 2h1v1h-1zM5 2h1v1h-1zM7 2h1v1h-1zM10 2h1v1h-1zM1 3h1v1h-1zM4 3h1v1h-1zM6 3h1v1h-1zM9 3h1v1h-1zM11 3h1v1h-1zM1 4h1v1h-1zM3 4h1v1h-1zM5 4h1v1h-1zM8 4h1v1h-1zM9 4h1v1h-1zM2 5h1v1h-1zM4 5h1v1h-1zM7 5h1v1h-1zM9 5h1v1h-1zM10 5h1v1h-1zM1 6h1v1h-1zM2 6h1v1h-1zM5 6h1v1h-1zM6 6h1v1h-1zM8 6h1v1h-1zM10 6h1v1h-1zM11 6h1v1h-1zM1 7h1v1h-1zM3 7h1v1h-1zM4 7h1v1h-1zM6 7h1v1h-1zM7 7h1v1h-1zM9 7h1v1h-1zM11 7h1v1h-1z" fill="#2d7cc0"/><rect x="1" y="8" width="11" height="4" fill="#1e70b6"/><path d="M2 8h1v1h-1zM5 8h2v1h-2zM8 9h1v1h-1zM10 8h1v2h-1zM9 10h2v1h-2zM3 10h1v1h-1zM6 9h1v1h-1z" fill="#cfe3f4"/></svg>
<span class="t ls" style="left:61.50px;top:480.32px;font-size:9.60px;line-height:9.60px;color:#000;letter-spacing:-0.045px;">lowEnergyAngleEDSSD2</span>
<div class="b" style="left:39.00px;top:500.03px;width:7.50px;height:1.00px;background:#c6c6ce"></div>
<svg class="a" style="left:47.00px;top:494.33px" width="12.400" height="12.400" viewBox="0 0 13 13"><rect x="0.500" y="0.500" width="12" height="12" fill="#fbfbfa" stroke="#cfcfc9" stroke-width="1"/><path d="M2.500 2v6M4.500 2v5M6.500 2v6M8.500 2v5M10.500 2v6" stroke="#dcdcd8" stroke-width="0.900"/><path d="M1 12V9L2.300 7.800 3.300 5 4.300 7.600 5.300 6.600 6.300 5.200 7.300 7.800 8.300 6.500 9.300 5.800 10.300 8.200 12 10V12z" fill="#9a9a98"/><rect x="1" y="10" width="11" height="2" fill="#8a8a88"/></svg>
<span class="t ls" style="left:61.50px;top:494.71px;font-size:9.60px;line-height:9.60px;color:#000;letter-spacing:-0.043px;">lowEnergyEyTotalDSSD2</span>
<div class="b" style="left:39.00px;top:514.42px;width:7.50px;height:1.00px;background:#c6c6ce"></div>
<svg class="a" style="left:47.00px;top:508.72px" width="12.400" height="12.400" viewBox="0 0 13 13"><rect x="0.500" y="0.500" width="12" height="12" fill="#fbfbfa" stroke="#cfcfc9" stroke-width="1"/><path d="M2.500 2v6M4.500 2v5M6.500 2v6M8.500 2v5M10.500 2v6" stroke="#dcdcd8" stroke-width="0.900"/><path d="M1 12V9L2.300 7.800 3.300 5 4.300 7.600 5.300 6.600 6.300 5.200 7.300 7.800 8.300 6.500 9.300 5.800 10.300 8.200 12 10V12z" fill="#9a9a98"/><rect x="1" y="10" width="11" height="2" fill="#8a8a88"/></svg>
<span class="t ls" style="left:61.50px;top:509.10px;font-size:9.60px;line-height:9.60px;color:#000;letter-spacing:-0.043px;">lowEnergyExTotalDSSD2</span>
<div class="b" style="left:39.00px;top:528.81px;width:7.50px;height:1.00px;background:#c6c6ce"></div>
<svg class="a" style="left:47.00px;top:523.11px" width="12.400" height="12.400" viewBox="0 0 13 13"><rect x="0.500" y="0.500" width="12" height="12" fill="#fbfbfa" stroke="#cfcfc9" stroke-width="1"/><path d="M2.500 2v6M4.500 2v5M6.500 2v6M8.500 2v5M10.500 2v6" stroke="#dcdcd8" stroke-width="0.900"/><path d="M1 12V9L2.300 7.800 3.300 5 4.300 7.600 5.300 6.600 6.300 5.200 7.300 7.800 8.300 6.500 9.300 5.800 10.300 8.200 12 10V12z" fill="#9a9a98"/><rect x="1" y="10" width="11" height="2" fill="#8a8a88"/></svg>
<span class="t ls" style="left:61.50px;top:523.48px;font-size:9.60px;line-height:9.60px;color:#000;letter-spacing:-0.046px;">lowEnergyEyRateDSSD2</span>
<div class="b" style="left:39.00px;top:543.20px;width:7.50px;height:1.00px;background:#c6c6ce"></div>
<svg class="a" style="left:47.00px;top:537.50px" width="12.400" height="12.400" viewBox="0 0 13 13"><rect x="0.500" y="0.500" width="12" height="12" fill="#fbfbfa" stroke="#cfcfc9" stroke-width="1"/><path d="M2.500 2v6M4.500 2v5M6.500 2v6M8.500 2v5M10.500 2v6" stroke="#dcdcd8" stroke-width="0.900"/><path d="M1 12V9L2.300 7.800 3.300 5 4.300 7.600 5.300 6.600 6.300 5.200 7.300 7.800 8.300 6.500 9.300 5.800 10.300 8.200 12 10V12z" fill="#9a9a98"/><rect x="1" y="10" width="11" height="2" fill="#8a8a88"/></svg>
<span class="t ls" style="left:61.50px;top:537.87px;font-size:9.60px;line-height:9.60px;color:#000;letter-spacing:-0.046px;">lowEnergyExRateDSSD2</span>
<div class="b" style="left:39.00px;top:557.59px;width:7.50px;height:1.00px;background:#c6c6ce"></div>
<svg class="a" style="left:47.00px;top:551.89px" width="12.400" height="12.400" viewBox="0 0 13 13"><rect x="0.500" y="0.500" width="12" height="12" fill="#eef4fa" stroke="#d6d6ce" stroke-width="1"/><rect x="1" y="1" width="11" height="11" fill="#e4eef8"/><path d="M3 1h1v1h-1zM6 1h1v1h-1zM9 1h1v1h-1zM2 2h1v1h-1zM5 2h1v1h-1zM7 2h1v1h-1zM10 2h1v1h-1zM1 3h1v1h-1zM4 3h1v1h-1zM6 3h1v1h-1zM9 3h1v1h-1zM11 3h1v1h-1zM1 4h1v1h-1zM3 4h1v1h-1zM5 4h1v1h-1zM8 4h1v1h-1zM9 4h1v1h-1zM2 5h1v1h-1zM4 5h1v1h-1zM7 5h1v1h-1zM9 5h1v1h-1zM10 5h1v1h-1zM1 6h1v1h-1zM2 6h1v1h-1zM5 6h1v1h-1zM6 6h1v1h-1zM8 6h1v1h-1zM10 6h1v1h-1zM11 6h1v1h-1zM1 7h1v1h-1zM3 7h1v1h-1zM4 7h1v1h-1zM6 7h1v1h-1zM7 7h1v1h-1zM9 7h1v1h-1zM11 7h1v1h-1z" fill="#2d7cc0"/><rect x="1" y="8" width="11" height="4" fill="#1e70b6"/><path d="M2 8h1v1h-1zM5 8h2v1h-2zM8 9h1v1h-1zM10 8h1v2h-1zM9 10h2v1h-2zM3 10h1v1h-1zM6 9h1v1h-1z" fill="#cfe3f4"/></svg>
<span class="t ls" style="left:61.50px;top:552.26px;font-size:9.60px;line-height:9.60px;color:#000;letter-spacing:-0.047px;">lowEnergyExEyDSSD3</span>
<div class="b" style="left:39.00px;top:571.98px;width:7.50px;height:1.00px;background:#c6c6ce"></div>
<svg class="a" style="left:47.00px;top:566.28px" width="12.400" height="12.400" viewBox="0 0 13 13"><rect x="0.500" y="0.500" width="12" height="12" fill="#eef4fa" stroke="#d6d6ce" stroke-width="1"/><rect x="1" y="1" width="11" height="11" fill="#e4eef8"/><path d="M3 1h1v1h-1zM6 1h1v1h-1zM9 1h1v1h-1zM2 2h1v1h-1zM5 2h1v1h-1zM7 2h1v1h-1zM10 2h1v1h-1zM1 3h1v1h-1zM4 3h1v1h-1zM6 3h1v1h-1zM9 3h1v1h-1zM11 3h1v1h-1zM1 4h1v1h-1zM3 4h1v1h-1zM5 4h1v1h-1zM8 4h1v1h-1zM9 4h1v1h-1zM2 5h1v1h-1zM4 5h1v1h-1zM7 5h1v1h-1zM9 5h1v1h-1zM10 5h1v1h-1zM1 6h1v1h-1zM2 6h1v1h-1zM5 6h1v1h-1zM6 6h1v1h-1zM8 6h1v1h-1zM10 6h1v1h-1zM11 6h1v1h-1zM1 7h1v1h-1zM3 7h1v1h-1zM4 7h1v1h-1zM6 7h1v1h-1zM7 7h1v1h-1zM9 7h1v1h-1zM11 7h1v1h-1z" fill="#2d7cc0"/><rect x="1" y="8" width="11" height="4" fill="#1e70b6"/><path d="M2 8h1v1h-1zM5 8h2v1h-2zM8 9h1v1h-1zM10 8h1v2h-1zM9 10h2v1h-2zM3 10h1v1h-1zM6 9h1v1h-1z" fill="#cfe3f4"/></svg>
<span class="t ls" style="left:61.50px;top:566.65px;font-size:9.60px;line-height:9.60px;color:#000;letter-spacing:-0.038px;">xyMultiplicityDSSD3</span>
<div class="b" style="left:39.00px;top:586.37px;width:7.50px;height:1.00px;background:#c6c6ce"></div>
<svg class="a" style="left:47.00px;top:580.67px" width="12.400" height="12.400" viewBox="0 0 13 13"><rect x="0.500" y="0.500" width="12" height="12" fill="#eef4fa" stroke="#d6d6ce" stroke-width="1"/><rect x="1" y="1" width="11" height="11" fill="#e4eef8"/><path d="M3 1h1v1h-1zM6 1h1v1h-1zM9 1h1v1h-1zM2 2h1v1h-1zM5 2h1v1h-1zM7 2h1v1h-1zM10 2h1v1h-1zM1 3h1v1h-1zM4 3h1v1h-1zM6 3h1v1h-1zM9 3h1v1h-1zM11 3h1v1h-1zM1 4h1v1h-1zM3 4h1v1h-1zM5 4h1v1h-1zM8 4h1v1h-1zM9 4h1v1h-1zM2 5h1v1h-1zM4 5h1v1h-1zM7 5h1v1h-1zM9 5h1v1h-1zM10 5h1v1h-1zM1 6h1v1h-1zM2 6h1v1h-1zM5 6h1v1h-1zM6 6h1v1h-1zM8 6h1v1h-1zM10 6h1v1h-1zM11 6h1v1h-1zM1 7h1v1h-1zM3 7h1v1h-1zM4 7h1v1h-1zM6 7h1v1h-1zM7 7h1v1h-1zM9 7h1v1h-1zM11 7h1v1h-1z" fill="#2d7cc0"/><rect x="1" y="8" width="11" height="4" fill="#1e70b6"/><path d="M2 8h1v1h-1zM5 8h2v1h-2zM8 9h1v1h-1zM10 8h1v2h-1zM9 10h2v1h-2zM3 10h1v1h-1zM6 9h1v1h-1z" fill="#cfe3f4"/></svg>
<span class="t ls" style="left:61.50px;top:581.04px;font-size:9.60px;line-height:9.60px;color:#000;letter-spacing:-0.048px;">lowEnergyXYDSSD3</span>
<div class="b" style="left:39.00px;top:600.76px;width:7.50px;height:1.00px;background:#c6c6ce"></div>
<svg class="a" style="left:47.00px;top:595.06px" width="12.400" height="12.400" viewBox="0 0 13 13"><rect x="0.500" y="0.500" width="12" height="12" fill="#eef4fa" stroke="#d6d6ce" stroke-width="1"/><rect x="1" y="1" width="11" height="11" fill="#e4eef8"/><path d="M3 1h1v1h-1zM6 1h1v1h-1zM9 1h1v1h-1zM2 2h1v1h-1zM5 2h1v1h-1zM7 2h1v1h-1zM10 2h1v1h-1zM1 3h1v1h-1zM4 3h1v1h-1zM6 3h1v1h-1zM9 3h1v1h-1zM11 3h1v1h-1zM1 4h1v1h-1zM3 4h1v1h-1zM5 4h1v1h-1zM8 4h1v1h-1zM9 4h1v1h-1zM2 5h1v1h-1zM4 5h1v1h-1zM7 5h1v1h-1zM9 5h1v1h-1zM10 5h1v1h-1zM1 6h1v1h-1zM2 6h1v1h-1zM5 6h1v1h-1zM6 6h1v1h-1zM8 6h1v1h-1zM10 6h1v1h-1zM11 6h1v1h-1zM1 7h1v1h-1zM3 7h1v1h-1zM4 7h1v1h-1zM6 7h1v1h-1zM7 7h1v1h-1zM9 7h1v1h-1zM11 7h1v1h-1z" fill="#2d7cc0"/><rect x="1" y="8" width="11" height="4" fill="#1e70b6"/><path d="M2 8h1v1h-1zM5 8h2v1h-2zM8 9h1v1h-1zM10 8h1v2h-1zM9 10h2v1h-2zM3 10h1v1h-1zM6 9h1v1h-1z" fill="#cfe3f4"/></svg>
<span class="t ls" style="left:61.50px;top:595.43px;font-size:9.60px;line-height:9.60px;color:#000;letter-spacing:-0.045px;">lowEnergyAngleEDSSD3</span>
<div class="b" style="left:39.00px;top:615.14px;width:7.50px;height:1.00px;background:#c6c6ce"></div>
<svg class="a" style="left:47.00px;top:609.44px" width="12.400" height="12.400" viewBox="0 0 13 13"><rect x="0.500" y="0.500" width="12" height="12" fill="#fbfbfa" stroke="#cfcfc9" stroke-width="1"/><path d="M2.500 2v6M4.500 2v5M6.500 2v6M8.500 2v5M10.500 2v6" stroke="#dcdcd8" stroke-width="0.900"/><path d="M1 12V9L2.300 7.800 3.300 5 4.300 7.600 5.300 6.600 6.300 5.200 7.300 7.800 8.300 6.500 9.300 5.800 10.300 8.200 12 10V12z" fill="#9a9a98"/><rect x="1" y="10" width="11" height="2" fill="#8a8a88"/></svg>
<span class="t ls" style="left:61.50px;top:609.82px;font-size:9.60px;line-height:9.60px;color:#000;letter-spacing:-0.043px;">lowEnergyEyTotalDSSD3</span>
<div class="b" style="left:39.00px;top:629.53px;width:7.50px;height:1.00px;background:#c6c6ce"></div>
<svg class="a" style="left:47.00px;top:623.83px" width="12.400" height="12.400" viewBox="0 0 13 13"><rect x="0.500" y="0.500" width="12" height="12" fill="#fbfbfa" stroke="#cfcfc9" stroke-width="1"/><path d="M2.500 2v6M4.500 2v5M6.500 2v6M8.500 2v5M10.500 2v6" stroke="#dcdcd8" stroke-width="0.900"/><path d="M1 12V9L2.300 7.800 3.300 5 4.300 7.600 5.300 6.600 6.300 5.200 7.300 7.800 8.300 6.500 9.300 5.800 10.300 8.200 12 10V12z" fill="#9a9a98"/><rect x="1" y="10" width="11" height="2" fill="#8a8a88"/></svg>
<span class="t ls" style="left:61.50px;top:624.21px;font-size:9.60px;line-height:9.60px;color:#000;letter-spacing:-0.043px;">lowEnergyExTotalDSSD3</span>
<div class="b" style="left:39.00px;top:643.92px;width:7.50px;height:1.00px;background:#c6c6ce"></div>
<svg class="a" style="left:47.00px;top:638.22px" width="12.400" height="12.400" viewBox="0 0 13 13"><rect x="0.500" y="0.500" width="12" height="12" fill="#fbfbfa" stroke="#cfcfc9" stroke-width="1"/><path d="M2.500 2v6M4.500 2v5M6.500 2v6M8.500 2v5M10.500 2v6" stroke="#dcdcd8" stroke-width="0.900"/><path d="M1 12V9L2.300 7.800 3.300 5 4.300 7.600 5.300 6.600 6.300 5.200 7.300 7.800 8.300 6.500 9.300 5.800 10.300 8.200 12 10V12z" fill="#9a9a98"/><rect x="1" y="10" width="11" height="2" fill="#8a8a88"/></svg>
<span class="t ls" style="left:61.50px;top:638.60px;font-size:9.60px;line-height:9.60px;color:#000;letter-spacing:-0.046px;">lowEnergyEyRateDSSD3</span>
<div class="b" style="left:39.00px;top:658.31px;width:7.50px;height:1.00px;background:#c6c6ce"></div>
<svg class="a" style="left:47.00px;top:652.61px" width="12.400" height="12.400" viewBox="0 0 13 13"><rect x="0.500" y="0.500" width="12" height="12" fill="#fbfbfa" stroke="#cfcfc9" stroke-width="1"/><path d="M2.500 2v6M4.500 2v5M6.500 2v6M8.500 2v5M10.500 2v6" stroke="#dcdcd8" stroke-width="0.900"/><path d="M1 12V9L2.300 7.800 3.300 5 4.300 7.600 5.300 6.600 6.300 5.200 7.300 7.800 8.300 6.500 9.300 5.800 10.300 8.200 12 10V12z" fill="#9a9a98"/><rect x="1" y="10" width="11" height="2" fill="#8a8a88"/></svg>
<span class="t ls" style="left:61.50px;top:652.98px;font-size:9.60px;line-height:9.60px;color:#000;letter-spacing:-0.046px;">lowEnergyExRateDSSD3</span>
<div class="b" style="left:39.00px;top:672.70px;width:7.50px;height:1.00px;background:#c6c6ce"></div>
<svg class="a" style="left:47.00px;top:667.00px" width="12.400" height="12.400" viewBox="0 0 13 13"><rect x="0.500" y="0.500" width="12" height="12" fill="#eef4fa" stroke="#d6d6ce" stroke-width="1"/><rect x="1" y="1" width="11" height="11" fill="#e4eef8"/><path d="M3 1h1v1h-1zM6 1h1v1h-1zM9 1h1v1h-1zM2 2h1v1h-1zM5 2h1v1h-1zM7 2h1v1h-1zM10 2h1v1h-1zM1 3h1v1h-1zM4 3h1v1h-1zM6 3h1v1h-1zM9 3h1v1h-1zM11 3h1v1h-1zM1 4h1v1h-1zM3 4h1v1h-1zM5 4h1v1h-1zM8 4h1v1h-1zM9 4h1v1h-1zM2 5h1v1h-1zM4 5h1v1h-1zM7 5h1v1h-1zM9 5h1v1h-1zM10 5h1v1h-1zM1 6h1v1h-1zM2 6h1v1h-1zM5 6h1v1h-1zM6 6h1v1h-1zM8 6h1v1h-1zM10 6h1v1h-1zM11 6h1v1h-1zM1 7h1v1h-1zM3 7h1v1h-1zM4 7h1v1h-1zM6 7h1v1h-1zM7 7h1v1h-1zM9 7h1v1h-1zM11 7h1v1h-1z" fill="#2d7cc0"/><rect x="1" y="8" width="11" height="4" fill="#1e70b6"/><path d="M2 8h1v1h-1zM5 8h2v1h-2zM8 9h1v1h-1zM10 8h1v2h-1zM9 10h2v1h-2zM3 10h1v1h-1zM6 9h1v1h-1z" fill="#cfe3f4"/></svg>
<span class="t ls" style="left:61.50px;top:667.37px;font-size:9.60px;line-height:9.60px;color:#000;letter-spacing:-0.045px;">lowEnergyChannelADC</span>
</div>
<svg class="a" style="left:0;top:0" width="1920" height="1080" viewBox="0 0 1920 1080" font-family="Liberation Sans, sans-serif" fill="#000">
<rect x="289.50" y="159.50" width="687.00" height="371.50" fill="#fff"/>
<g transform="translate(289.50 159.50)"><path d="M0.00 167.40H1.72V124.30H3.44V85.30H5.15V53.40H6.87V31.10H8.59V14.50H10.30V5.20H12.02V1.05H13.74V4.76H15.46V9.85H17.18V14.00H18.89V18.00H20.61V23.00H22.33V28.40H24.05V35.10H25.76V40.10H27.48V46.90H29.20V57.50H30.91V75.90H32.63V95.90H34.35V99.60H36.07V102.10H37.79V110.10H39.50V130.10H41.22V156.80H42.94V182.80H44.66V198.10H46.37V211.80H48.09V218.70H49.81V226.10H51.52V233.50H53.24V239.00H54.96V247.00H56.68V261.80H58.40V260.90H60.11V270.80H61.83V282.40H63.55V284.10H65.27V298.20H66.98V290.80H68.70V316.22H70.42V322.38H72.14V345.90H73.85V322.38H75.57V345.90H77.29V371.50H80.72V345.90H82.44V371.50H84.16V322.38H85.88V331.06H87.59V345.90H89.31V331.06H91.03V371.50H94.46V345.90H96.18V371.50H113.36V345.90H116.79V371.50H118.51V345.90H120.23V371.50H121.94V331.06H123.66V371.50H127.09V345.90H128.81V371.50H144.27V345.90H145.99V371.50H183.77V345.90H185.49V371.50H211.25V345.90H212.97V371.50H252.47V345.90H255.91V371.50H273.08V345.90H274.80V371.50H276.52V345.90H278.24V371.50H352.09V345.90H353.81V371.50H381.29V345.90H384.72V371.50H427.66V345.90H429.38V371.50H439.68V345.90H441.40V371.50H446.55V345.90H448.27V371.50H496.36V345.90H498.07V371.50H503.23V331.06H504.94V345.90H506.66V371.50H528.99V345.90H532.42V371.50H546.16V345.90H547.88V371.50H554.75V345.90H556.47V371.50H565.06V345.90H568.49V371.50H620.02V345.90H621.74V371.50H625.17V345.90H626.89V371.50H642.35V345.90H644.06V371.50H687.00" fill="none" stroke="rgb(0,0,153)" stroke-width="0.8" stroke-linejoin="miter"/></g>
<path d="M289.50 531.00H976.50M289.50 159.50V531.00" stroke="#000" stroke-width="0.8" fill="none"/>
<rect x="289.50" y="159.50" width="687.00" height="371.50" fill="none" stroke="#000" stroke-width="0.8"/>
<path d="M289.50 531.00v-14.00M323.85 531.00v-7.30M358.20 531.00v-7.30M392.55 531.00v-7.30M426.90 531.00v-14.00M461.25 531.00v-7.30M495.60 531.00v-7.30M529.95 531.00v-7.30M564.30 531.00v-14.00M598.65 531.00v-7.30M633.00 531.00v-7.30M667.35 531.00v-7.30M701.70 531.00v-14.00M736.05 531.00v-7.30M770.40 531.00v-7.30M804.75 531.00v-7.30M839.10 531.00v-14.00M873.45 531.00v-7.30M907.80 531.00v-7.30M942.15 531.00v-7.30M976.50 531.00v-14.00" stroke="#000" stroke-width="0.8" fill="none"/>
<text x="289.90" y="548.20" font-size="16.00" text-anchor="middle" >0</text>
<text x="427.08" y="548.20" font-size="16.00" text-anchor="middle" >2000</text>
<text x="564.26" y="548.20" font-size="16.00" text-anchor="middle" >4000</text>
<text x="701.44" y="548.20" font-size="16.00" text-anchor="middle" >6000</text>
<text x="838.62" y="548.20" font-size="16.00" text-anchor="middle" >8000</text>
<text x="975.80" y="548.20" font-size="16.00" text-anchor="middle" >10000</text>
<text x="976.20" y="561.20" font-size="16.00" text-anchor="end" >Energy [MeV]</text>
<text transform="translate(245.10 159.80) rotate(-90)" font-size="16" text-anchor="end">Counts</text>
<path d="M289.50 505.40h25.5M289.50 456.10h25.5M289.50 406.80h25.5M289.50 357.50h25.5M289.50 308.20h25.5M289.50 258.90h25.5M289.50 209.60h25.5M289.50 160.30h25.5M289.50 531.18h13M289.50 525.02h13M289.50 520.24h13M289.50 516.34h13M289.50 513.04h13M289.50 510.18h13M289.50 507.66h13M289.50 490.56h13M289.50 481.88h13M289.50 475.72h13M289.50 470.94h13M289.50 467.04h13M289.50 463.74h13M289.50 460.88h13M289.50 458.36h13M289.50 441.26h13M289.50 432.58h13M289.50 426.42h13M289.50 421.64h13M289.50 417.74h13M289.50 414.44h13M289.50 411.58h13M289.50 409.06h13M289.50 391.96h13M289.50 383.28h13M289.50 377.12h13M289.50 372.34h13M289.50 368.44h13M289.50 365.14h13M289.50 362.28h13M289.50 359.76h13M289.50 342.66h13M289.50 333.98h13M289.50 327.82h13M289.50 323.04h13M289.50 319.14h13M289.50 315.84h13M289.50 312.98h13M289.50 310.46h13M289.50 293.36h13M289.50 284.68h13M289.50 278.52h13M289.50 273.74h13M289.50 269.84h13M289.50 266.54h13M289.50 263.68h13M289.50 261.16h13M289.50 244.06h13M289.50 235.38h13M289.50 229.22h13M289.50 224.44h13M289.50 220.54h13M289.50 217.24h13M289.50 214.38h13M289.50 211.86h13M289.50 194.76h13M289.50 186.08h13M289.50 179.92h13M289.50 175.14h13M289.50 171.24h13M289.50 167.94h13M289.50 165.08h13M289.50 162.56h13" stroke="#000" stroke-width="0.8" fill="none"/>
<text x="281.20" y="512.70" font-size="16.00" text-anchor="end" >10</text>
<text x="286.90" y="506.60" font-size="9.00" text-anchor="end" >0</text>
<text x="281.20" y="463.40" font-size="16.00" text-anchor="end" >10</text>
<text x="286.90" y="457.30" font-size="9.00" text-anchor="end" >1</text>
<text x="281.20" y="414.10" font-size="16.00" text-anchor="end" >10</text>
<text x="286.90" y="408.00" font-size="9.00" text-anchor="end" >2</text>
<text x="281.20" y="364.80" font-size="16.00" text-anchor="end" >10</text>
<text x="286.90" y="358.70" font-size="9.00" text-anchor="end" >3</text>
<text x="281.20" y="315.50" font-size="16.00" text-anchor="end" >10</text>
<text x="286.90" y="309.40" font-size="9.00" text-anchor="end" >4</text>
<text x="281.20" y="266.20" font-size="16.00" text-anchor="end" >10</text>
<text x="286.90" y="260.10" font-size="9.00" text-anchor="end" >5</text>
<text x="281.20" y="216.90" font-size="16.00" text-anchor="end" >10</text>
<text x="286.90" y="210.80" font-size="9.00" text-anchor="end" >6</text>
<text x="281.20" y="167.60" font-size="16.00" text-anchor="end" >10</text>
<text x="286.90" y="161.50" font-size="9.00" text-anchor="end" >7</text>
<rect x="873.25" y="143.25" width="171.25" height="74.50" fill="#fff" stroke="#000" stroke-width="0.8"/>
<path d="M873.25 158.50H1044.50" stroke="#000" stroke-width="0.8"/>
<text x="958.48" y="154.20" font-size="12.60" text-anchor="middle" textLength="144.6">lowEnergyEyTotalDSSD0</text>
<text x="882.45" y="168.70" font-size="12.80" text-anchor="start" >Entries</text>
<text x="1035.20" y="168.70" font-size="12.80" text-anchor="end" >64112330</text>
<text x="882.45" y="183.70" font-size="12.80" text-anchor="start" >Mean</text>
<text x="1035.20" y="183.70" font-size="12.80" text-anchor="end" >230.5</text>
<text x="882.45" y="198.70" font-size="12.80" text-anchor="start" >Std Dev</text>
<text x="1035.20" y="198.70" font-size="12.80" text-anchor="end" >81.89</text>
<text x="882.45" y="213.70" font-size="12.80" text-anchor="start" >Integral</text>
<text x="1035.20" y="213.70" font-size="12.80" text-anchor="end" >64112282</text>
<rect x="207.50" y="563.70" width="9" height="9" fill="#b0c4de"/>
<rect x="1147.50" y="159.50" width="687.00" height="371.50" fill="#fff"/>
<g transform="translate(1147.50 159.50)"><path d="M0.00 329.80H1.72V282.40H3.44V228.20H5.15V174.60H6.87V120.10H8.59V69.10H10.30V33.90H12.02V12.20H13.74V1.50H15.46V0.60H17.18V9.85H18.89V23.60H20.61V26.50H22.33V36.20H24.05V69.10H25.76V115.00H27.48V137.30H29.20V144.90H30.91V149.50H32.63V154.40H34.35V158.60H36.07V162.50H37.79V166.00H39.50V165.70H41.22V164.90H42.94V174.30H44.66V193.50H46.37V204.80H48.09V207.50H49.81V215.90H51.52V218.60H53.24V222.60H54.96V231.00H56.68V237.90H58.40V244.70H60.11V254.90H61.83V262.20H63.55V266.60H65.27V273.80H66.98V286.10H68.70V298.60H70.42V314.44H72.14V309.50H73.85V320.82H75.57V329.80H77.29V345.15H79.00V371.50H80.72V345.15H82.44V371.50H84.16V345.15H91.03V329.80H94.46V371.50H118.51V345.15H120.23V329.80H121.94V345.15H123.66V320.82H125.38V345.15H127.09V371.50H145.99V345.15H147.71V371.50H194.08V345.15H195.80V371.50H245.60V345.15H247.32V371.50H254.19V345.15H255.91V371.50H261.06V345.15H262.78V371.50H360.68V345.15H364.11V371.50H367.55V345.15H369.26V371.50H372.70V345.15H376.13V371.50H400.18V345.15H401.89V371.50H432.81V345.15H434.53V371.50H437.96V345.15H439.68V371.50H687.00" fill="none" stroke="rgb(0,0,153)" stroke-width="0.8" stroke-linejoin="miter"/></g>
<path d="M1147.50 531.00H1834.50M1147.50 159.50V531.00" stroke="#000" stroke-width="0.8" fill="none"/>
<rect x="1147.50" y="159.50" width="687.00" height="371.50" fill="none" stroke="#000" stroke-width="0.8"/>
<path d="M1147.50 531.00v-14.00M1181.85 531.00v-7.30M1216.20 531.00v-7.30M1250.55 531.00v-7.30M1284.90 531.00v-14.00M1319.25 531.00v-7.30M1353.60 531.00v-7.30M1387.95 531.00v-7.30M1422.30 531.00v-14.00M1456.65 531.00v-7.30M1491.00 531.00v-7.30M1525.35 531.00v-7.30M1559.70 531.00v-14.00M1594.05 531.00v-7.30M1628.40 531.00v-7.30M1662.75 531.00v-7.30M1697.10 531.00v-14.00M1731.45 531.00v-7.30M1765.80 531.00v-7.30M1800.15 531.00v-7.30M1834.50 531.00v-14.00" stroke="#000" stroke-width="0.8" fill="none"/>
<text x="1147.90" y="548.20" font-size="16.00" text-anchor="middle" >0</text>
<text x="1285.08" y="548.20" font-size="16.00" text-anchor="middle" >2000</text>
<text x="1422.26" y="548.20" font-size="16.00" text-anchor="middle" >4000</text>
<text x="1559.44" y="548.20" font-size="16.00" text-anchor="middle" >6000</text>
<text x="1696.62" y="548.20" font-size="16.00" text-anchor="middle" >8000</text>
<text x="1833.80" y="548.20" font-size="16.00" text-anchor="middle" >10000</text>
<text x="1834.20" y="561.20" font-size="16.00" text-anchor="end" >Energy [MeV]</text>
<text transform="translate(1103.10 159.80) rotate(-90)" font-size="16" text-anchor="end">Counts</text>
<path d="M1147.50 504.65h25.5M1147.50 453.65h25.5M1147.50 402.65h25.5M1147.50 351.65h25.5M1147.50 300.65h25.5M1147.50 249.65h25.5M1147.50 198.65h25.5M1147.50 524.94h13M1147.50 520.00h13M1147.50 515.96h13M1147.50 512.55h13M1147.50 509.59h13M1147.50 506.98h13M1147.50 489.30h13M1147.50 480.32h13M1147.50 473.94h13M1147.50 469.00h13M1147.50 464.96h13M1147.50 461.55h13M1147.50 458.59h13M1147.50 455.98h13M1147.50 438.30h13M1147.50 429.32h13M1147.50 422.94h13M1147.50 418.00h13M1147.50 413.96h13M1147.50 410.55h13M1147.50 407.59h13M1147.50 404.98h13M1147.50 387.30h13M1147.50 378.32h13M1147.50 371.94h13M1147.50 367.00h13M1147.50 362.96h13M1147.50 359.55h13M1147.50 356.59h13M1147.50 353.98h13M1147.50 336.30h13M1147.50 327.32h13M1147.50 320.94h13M1147.50 316.00h13M1147.50 311.96h13M1147.50 308.55h13M1147.50 305.59h13M1147.50 302.98h13M1147.50 285.30h13M1147.50 276.32h13M1147.50 269.94h13M1147.50 265.00h13M1147.50 260.96h13M1147.50 257.55h13M1147.50 254.59h13M1147.50 251.98h13M1147.50 234.30h13M1147.50 225.32h13M1147.50 218.94h13M1147.50 214.00h13M1147.50 209.96h13M1147.50 206.55h13M1147.50 203.59h13M1147.50 200.98h13M1147.50 183.30h13M1147.50 174.32h13M1147.50 167.94h13M1147.50 163.00h13" stroke="#000" stroke-width="0.8" fill="none"/>
<text x="1139.20" y="510.95" font-size="16.00" text-anchor="end" >10</text>
<text x="1144.90" y="504.85" font-size="9.00" text-anchor="end" >0</text>
<text x="1139.20" y="459.95" font-size="16.00" text-anchor="end" >10</text>
<text x="1144.90" y="453.85" font-size="9.00" text-anchor="end" >1</text>
<text x="1139.20" y="408.95" font-size="16.00" text-anchor="end" >10</text>
<text x="1144.90" y="402.85" font-size="9.00" text-anchor="end" >2</text>
<text x="1139.20" y="357.95" font-size="16.00" text-anchor="end" >10</text>
<text x="1144.90" y="351.85" font-size="9.00" text-anchor="end" >3</text>
<text x="1139.20" y="306.95" font-size="16.00" text-anchor="end" >10</text>
<text x="1144.90" y="300.85" font-size="9.00" text-anchor="end" >4</text>
<text x="1139.20" y="255.95" font-size="16.00" text-anchor="end" >10</text>
<text x="1144.90" y="249.85" font-size="9.00" text-anchor="end" >5</text>
<text x="1139.20" y="204.95" font-size="16.00" text-anchor="end" >10</text>
<text x="1144.90" y="198.85" font-size="9.00" text-anchor="end" >6</text>
<rect x="1731.25" y="143.25" width="171.25" height="74.50" fill="#fff" stroke="#000" stroke-width="0.8"/>
<path d="M1731.25 158.50H1902.50" stroke="#000" stroke-width="0.8"/>
<text x="1816.47" y="154.20" font-size="12.60" text-anchor="middle" textLength="144.6">lowEnergyEyTotalDSSD1</text>
<text x="1740.45" y="168.70" font-size="12.80" text-anchor="start" >Entries</text>
<text x="1893.20" y="168.70" font-size="12.80" text-anchor="end" >25508560</text>
<text x="1740.45" y="183.70" font-size="12.80" text-anchor="start" >Mean</text>
<text x="1893.20" y="183.70" font-size="12.80" text-anchor="end" >239.5</text>
<text x="1740.45" y="198.70" font-size="12.80" text-anchor="start" >Std Dev</text>
<text x="1893.20" y="198.70" font-size="12.80" text-anchor="end" >48.49</text>
<text x="1740.45" y="213.70" font-size="12.80" text-anchor="start" >Integral</text>
<text x="1893.20" y="213.70" font-size="12.80" text-anchor="end" >25508539</text>
<rect x="1065.50" y="563.70" width="9" height="9" fill="#b0c4de"/>
<rect x="289.50" y="623.50" width="687.00" height="371.50" fill="#fff"/>
<g transform="translate(289.50 623.50)"><path d="M0.00 272.10H1.72V221.10H3.44V169.85H5.15V120.90H6.87V77.00H8.59V43.20H10.30V19.10H12.02V4.80H13.74V0.60H15.46V9.40H17.18V31.80H18.89V58.30H20.61V82.10H22.33V103.90H24.05V123.80H25.76V137.70H27.48V143.10H29.20V144.00H30.91V146.80H32.63V151.80H34.35V159.00H36.07V169.00H37.79V179.85H39.50V187.70H41.22V194.90H42.94V207.30H44.66V226.20H46.37V247.10H48.09V264.00H49.81V269.80H51.52V273.50H53.24V275.80H54.96V282.40H56.68V293.20H58.40V301.50H60.11V306.60H61.83V313.10H63.55V323.31H65.27V319.19H66.98V315.83H68.70V323.31H70.50V371.50H71.70V348.90H73.56V328.62H75.59V371.50H79.02V336.11H80.96V371.50H84.02V348.90H85.87V371.50H87.91V348.90H91.15V336.11H93.00V371.50H94.39V336.11H96.24V348.90H97.91V371.50H103.00V348.90H104.85V336.11H106.43V328.62H108.09V371.50H109.85V336.11H111.06V323.31H114.11V348.90H115.22V328.62H117.07V371.50H118.46V328.62H120.13V371.50H121.89V336.11H126.06V328.62H127.17V323.31H129.02V348.90H130.22V371.50H131.80V348.90H133.93V371.50H134.85V336.11H138.09V348.90H139.48V371.50H141.98V348.90H144.11V371.50H145.69V348.90H148.00V371.50H151.06V348.90H152.91V336.11H156.15V328.62H157.81V348.90H159.39V328.62H161.98V371.50H162.91V348.90H164.94V371.50H166.52V348.90H168.19V323.31H170.04V348.90H172.07V336.11H175.59V371.50H176.98V348.90H182.07V371.50H186.98V348.90H189.02V371.50H192.07V336.11H193.93V348.90H197.81V323.31H199.67V371.50H204.11V336.11H206.15V348.90H209.85V371.50H212.81V348.90H218.09V371.50H219.94V328.62H223.00V323.31H225.04V336.11H226.98V371.50H228.09V348.90H229.94V336.11H232.26V371.50H233.83V348.90H237.07V336.11H239.02V371.50H240.13V348.90H241.98V371.50H245.87V348.90H249.20V371.50H250.31V336.11H252.17V371.50H253.83V336.11H256.06V371.50H257.72V348.90H259.57V371.50H262.81V348.90H266.06V371.50H269.94V336.11H271.80V348.90H274.85V371.50H279.94V348.90H281.98V336.11H283.83V348.90H285.04V323.31H286.89V371.50H290.59V336.11H292.44V348.90H295.22V336.11H297.07V348.90H298.46V371.50H300.13V348.90H302.63V371.50H304.02V336.11H305.87V348.90H307.26V328.62H310.87V348.90H312.26V371.50H314.57V348.90H317.91V323.31H319.94V371.50H321.06V348.90H326.89V371.50H328.28V348.90H329.94V371.50H332.91V328.62H334.94V348.90H336.43V371.50H340.13V348.90H341.98V336.11H344.02V371.50H350.69V348.90H352.54V371.50H353.74V348.90H355.87V371.50H356.98V348.90H360.22V371.50H362.35V336.11H364.39V348.90H366.24V371.50H367.63V348.90H370.69V328.62H375.04V371.50H377.81V336.11H379.85V348.90H381.06V371.50H386.89V348.90H392.91V336.11H396.33V371.50H404.85V348.90H406.98V371.50H410.87V348.90H415.04V371.50H416.70V348.90H418.74V371.50H421.06V348.90H423.09V371.50H425.87V348.90H427.35V336.11H429.20V371.50H432.91V348.90H435.87V336.11H438.19V371.50H439.57V348.90H443.09V371.50H447.91V348.90H449.94V336.11H452.07V371.50H454.85V348.90H459.02V371.50H466.89V348.90H469.20V336.11H472.44V371.50H478.65V348.90H484.48V371.50H489.02V348.90H490.87V371.50H494.85V348.90H499.76V371.50H503.00V348.90H505.04V336.11H507.35V371.50H508.74V336.11H510.13V348.90H511.52V336.11H513.09V371.50H514.94V336.11H517.26V371.50H521.98V348.90H524.02V371.50H525.13V348.90H528.00V371.50H530.96V348.90H532.35V371.50H534.02V348.90H535.13V336.11H537.17V371.50H541.15V348.90H543.46V371.50H544.39V348.90H546.24V371.50H547.35V348.90H549.02V336.11H551.98V371.50H558.09V348.90H559.94V371.50H561.06V348.90H563.83V371.50H570.13V348.90H573.09V371.50H575.87V348.90H576.98V336.11H578.83V348.90H582.35V371.50H583.28V328.62H585.31V371.50H593.83V348.90H595.69V371.50H597.35V348.90H601.06V336.11H603.09V371.50H612.91V336.11H615.13V348.90H616.33V371.50H617.91V348.90H620.04V371.50H627.91V348.90H630.22V371.50H643.00V336.11H646.43V348.90H648.09V371.50H650.87V348.90H654.30V371.50H655.69V336.11H658.00V371.50H659.39V348.90H661.24V371.50H669.76V348.90H673.09V371.50H676.06V336.11H678.09V348.90H680.22V371.50H687" fill="none" stroke="rgb(0,0,153)" stroke-width="0.8" stroke-linejoin="miter"/></g>
<path d="M289.50 995.00H976.50M289.50 623.50V995.00" stroke="#000" stroke-width="0.8" fill="none"/>
<rect x="289.50" y="623.50" width="687.00" height="371.50" fill="none" stroke="#000" stroke-width="0.8"/>
<path d="M289.50 995.00v-14.00M323.85 995.00v-7.30M358.20 995.00v-7.30M392.55 995.00v-7.30M426.90 995.00v-14.00M461.25 995.00v-7.30M495.60 995.00v-7.30M529.95 995.00v-7.30M564.30 995.00v-14.00M598.65 995.00v-7.30M633.00 995.00v-7.30M667.35 995.00v-7.30M701.70 995.00v-14.00M736.05 995.00v-7.30M770.40 995.00v-7.30M804.75 995.00v-7.30M839.10 995.00v-14.00M873.45 995.00v-7.30M907.80 995.00v-7.30M942.15 995.00v-7.30M976.50 995.00v-14.00" stroke="#000" stroke-width="0.8" fill="none"/>
<text x="289.90" y="1012.20" font-size="16.00" text-anchor="middle" >0</text>
<text x="427.08" y="1012.20" font-size="16.00" text-anchor="middle" >2000</text>
<text x="564.26" y="1012.20" font-size="16.00" text-anchor="middle" >4000</text>
<text x="701.44" y="1012.20" font-size="16.00" text-anchor="middle" >6000</text>
<text x="838.62" y="1012.20" font-size="16.00" text-anchor="middle" >8000</text>
<text x="975.80" y="1012.20" font-size="16.00" text-anchor="middle" >10000</text>
<text x="976.20" y="1025.20" font-size="16.00" text-anchor="end" >Energy [MeV]</text>
<text transform="translate(245.10 623.80) rotate(-90)" font-size="16" text-anchor="end">Counts</text>
<path d="M289.50 972.40h25.5M289.50 929.90h25.5M289.50 887.40h25.5M289.50 844.90h25.5M289.50 802.40h25.5M289.50 759.90h25.5M289.50 717.40h25.5M289.50 674.90h25.5M289.50 632.40h25.5M289.50 994.62h13M289.50 989.31h13M289.50 985.19h13M289.50 981.83h13M289.50 978.98h13M289.50 976.52h13M289.50 974.34h13M289.50 959.61h13M289.50 952.12h13M289.50 946.81h13M289.50 942.69h13M289.50 939.33h13M289.50 936.48h13M289.50 934.02h13M289.50 931.84h13M289.50 917.11h13M289.50 909.62h13M289.50 904.31h13M289.50 900.19h13M289.50 896.83h13M289.50 893.98h13M289.50 891.52h13M289.50 889.34h13M289.50 874.61h13M289.50 867.12h13M289.50 861.81h13M289.50 857.69h13M289.50 854.33h13M289.50 851.48h13M289.50 849.02h13M289.50 846.84h13M289.50 832.11h13M289.50 824.62h13M289.50 819.31h13M289.50 815.19h13M289.50 811.83h13M289.50 808.98h13M289.50 806.52h13M289.50 804.34h13M289.50 789.61h13M289.50 782.12h13M289.50 776.81h13M289.50 772.69h13M289.50 769.33h13M289.50 766.48h13M289.50 764.02h13M289.50 761.84h13M289.50 747.11h13M289.50 739.62h13M289.50 734.31h13M289.50 730.19h13M289.50 726.83h13M289.50 723.98h13M289.50 721.52h13M289.50 719.34h13M289.50 704.61h13M289.50 697.12h13M289.50 691.81h13M289.50 687.69h13M289.50 684.33h13M289.50 681.48h13M289.50 679.02h13M289.50 676.84h13M289.50 662.11h13M289.50 654.62h13M289.50 649.31h13M289.50 645.19h13M289.50 641.83h13M289.50 638.98h13M289.50 636.52h13M289.50 634.34h13" stroke="#000" stroke-width="0.8" fill="none"/>
<text x="281.20" y="978.60" font-size="16.00" text-anchor="end" >10</text>
<text x="286.90" y="972.50" font-size="9.00" text-anchor="end" >0</text>
<text x="281.20" y="936.10" font-size="16.00" text-anchor="end" >10</text>
<text x="286.90" y="930.00" font-size="9.00" text-anchor="end" >1</text>
<text x="281.20" y="893.60" font-size="16.00" text-anchor="end" >10</text>
<text x="286.90" y="887.50" font-size="9.00" text-anchor="end" >2</text>
<text x="281.20" y="851.10" font-size="16.00" text-anchor="end" >10</text>
<text x="286.90" y="845.00" font-size="9.00" text-anchor="end" >3</text>
<text x="281.20" y="808.60" font-size="16.00" text-anchor="end" >10</text>
<text x="286.90" y="802.50" font-size="9.00" text-anchor="end" >4</text>
<text x="281.20" y="766.10" font-size="16.00" text-anchor="end" >10</text>
<text x="286.90" y="760.00" font-size="9.00" text-anchor="end" >5</text>
<text x="281.20" y="723.60" font-size="16.00" text-anchor="end" >10</text>
<text x="286.90" y="717.50" font-size="9.00" text-anchor="end" >6</text>
<text x="281.20" y="681.10" font-size="16.00" text-anchor="end" >10</text>
<text x="286.90" y="675.00" font-size="9.00" text-anchor="end" >7</text>
<text x="281.20" y="638.60" font-size="16.00" text-anchor="end" >10</text>
<text x="286.90" y="632.50" font-size="9.00" text-anchor="end" >8</text>
<rect x="873.25" y="607.25" width="171.25" height="74.50" fill="#fff" stroke="#000" stroke-width="0.8"/>
<path d="M873.25 622.50H1044.50" stroke="#000" stroke-width="0.8"/>
<text x="958.48" y="618.20" font-size="12.60" text-anchor="middle" textLength="144.6">lowEnergyEyTotalDSSD2</text>
<text x="882.45" y="632.70" font-size="12.80" text-anchor="start" >Entries</text>
<text x="1035.20" y="632.70" font-size="12.80" text-anchor="end" >477873889</text>
<text x="882.45" y="647.70" font-size="12.80" text-anchor="start" >Mean</text>
<text x="1035.20" y="647.70" font-size="12.80" text-anchor="end" >206.8</text>
<text x="882.45" y="662.70" font-size="12.80" text-anchor="start" >Std Dev</text>
<text x="1035.20" y="662.70" font-size="12.80" text-anchor="end" >32.97</text>
<text x="882.45" y="677.70" font-size="12.80" text-anchor="start" >Integral</text>
<text x="1035.20" y="677.70" font-size="12.80" text-anchor="end" >477873634</text>
<rect x="207.50" y="1027.70" width="9" height="9" fill="#b0c4de"/>
<rect x="1147.50" y="623.50" width="687.00" height="371.50" fill="#fff"/>
<g transform="translate(1147.50 623.50)"><path d="M0 371.5H687" fill="none" stroke="rgb(0,0,153)" stroke-width="0.8" stroke-linejoin="miter"/></g>
<path d="M1147.50 995.00H1834.50M1147.50 623.50V995.00" stroke="#000" stroke-width="0.8" fill="none"/>
<rect x="1147.50" y="623.50" width="687.00" height="371.50" fill="none" stroke="#000" stroke-width="0.8"/>
<path d="M1147.50 995.00v-14.00M1181.85 995.00v-7.30M1216.20 995.00v-7.30M1250.55 995.00v-7.30M1284.90 995.00v-14.00M1319.25 995.00v-7.30M1353.60 995.00v-7.30M1387.95 995.00v-7.30M1422.30 995.00v-14.00M1456.65 995.00v-7.30M1491.00 995.00v-7.30M1525.35 995.00v-7.30M1559.70 995.00v-14.00M1594.05 995.00v-7.30M1628.40 995.00v-7.30M1662.75 995.00v-7.30M1697.10 995.00v-14.00M1731.45 995.00v-7.30M1765.80 995.00v-7.30M1800.15 995.00v-7.30M1834.50 995.00v-14.00" stroke="#000" stroke-width="0.8" fill="none"/>
<text x="1147.90" y="1012.20" font-size="16.00" text-anchor="middle" >0</text>
<text x="1285.08" y="1012.20" font-size="16.00" text-anchor="middle" >2000</text>
<text x="1422.26" y="1012.20" font-size="16.00" text-anchor="middle" >4000</text>
<text x="1559.44" y="1012.20" font-size="16.00" text-anchor="middle" >6000</text>
<text x="1696.62" y="1012.20" font-size="16.00" text-anchor="middle" >8000</text>
<text x="1833.80" y="1012.20" font-size="16.00" text-anchor="middle" >10000</text>
<text x="1834.20" y="1025.20" font-size="16.00" text-anchor="end" >Energy [MeV]</text>
<text transform="translate(1103.10 623.80) rotate(-90)" font-size="16" text-anchor="end">Counts</text>
<path d="M1147.50 995.00h25.5M1147.50 976.42h13.0M1147.50 957.85h13.0M1147.50 939.27h13.0M1147.50 920.70h25.5M1147.50 902.12h13.0M1147.50 883.55h13.0M1147.50 864.98h13.0M1147.50 846.40h25.5M1147.50 827.83h13.0M1147.50 809.25h13.0M1147.50 790.67h13.0M1147.50 772.10h25.5M1147.50 753.52h13.0M1147.50 734.95h13.0M1147.50 716.38h13.0M1147.50 697.80h25.5M1147.50 679.23h13.0M1147.50 660.65h13.0M1147.50 642.08h13.0M1147.50 623.50h25.5" stroke="#000" stroke-width="0.8" fill="none"/>
<text x="1145.20" y="999.30" font-size="16.00" text-anchor="end" >0</text>
<text x="1145.20" y="925.00" font-size="16.00" text-anchor="end" >0.2</text>
<text x="1145.20" y="850.70" font-size="16.00" text-anchor="end" >0.4</text>
<text x="1145.20" y="776.40" font-size="16.00" text-anchor="end" >0.6</text>
<text x="1145.20" y="702.10" font-size="16.00" text-anchor="end" >0.8</text>
<text x="1145.20" y="627.80" font-size="16.00" text-anchor="end" >1</text>
<rect x="1731.25" y="607.25" width="171.25" height="74.50" fill="#fff" stroke="#000" stroke-width="0.8"/>
<path d="M1731.25 622.50H1902.50" stroke="#000" stroke-width="0.8"/>
<text x="1816.47" y="618.20" font-size="12.60" text-anchor="middle" textLength="144.6">lowEnergyEyTotalDSSD3</text>
<text x="1740.45" y="632.70" font-size="12.80" text-anchor="start" >Entries</text>
<text x="1893.20" y="632.70" font-size="12.80" text-anchor="end" >0</text>
<text x="1740.45" y="647.70" font-size="12.80" text-anchor="start" >Mean</text>
<text x="1893.20" y="647.70" font-size="12.80" text-anchor="end" >0.000e+0</text>
<text x="1740.45" y="662.70" font-size="12.80" text-anchor="start" >Std Dev</text>
<text x="1893.20" y="662.70" font-size="12.80" text-anchor="end" >0.000e+0</text>
<text x="1740.45" y="677.70" font-size="12.80" text-anchor="start" >Integral</text>
<text x="1893.20" y="677.70" font-size="12.80" text-anchor="end" >0</text>
<rect x="1065.50" y="1027.70" width="9" height="9" fill="#b0c4de"/>
</svg>
<!-- desktop chrome -->
<div class="b" style="left:0.00px;top:0.00px;width:1920.00px;height:27.00px;background:linear-gradient(#f6f6f6 0%,#ececec 45%,#dedede 100%)"></div>
<div class="b" style="left:0.00px;top:27.00px;width:1920.00px;height:1.00px;background:#5a5a5a"></div>
<svg class="a" style="left:8px;top:6px" width="15" height="15" viewBox="0 0 15 15"><g transform="rotate(0 7.5 7.500)"><rect x="2.600" y="2.600" width="4.300" height="4.300" fill="#9ccd2a"/><rect x="8.100" y="2.600" width="4.300" height="4.300" fill="#a2297e"/><rect x="2.600" y="8.100" width="4.300" height="4.300" fill="#262577"/><rect x="8.100" y="8.100" width="4.300" height="4.300" fill="#efa724"/><path d="M7.500 0.300L9.300 2.400H5.700zM7.500 14.700L5.700 12.600h3.600zM0.300 7.500L2.400 5.700v3.600zM14.700 7.500L12.600 9.300V5.700z" fill="#9ccd2a"/><path d="M14.700 7.500L12.600 9.300V5.700z" fill="#262577"/><path d="M0.300 7.500L2.400 5.700v3.600z" fill="#a2297e"/><path d="M7.500 14.700L5.700 12.600h3.600z" fill="#9ccd2a"/><path d="M7.500 0.300L9.300 2.400H5.700z" fill="#efa724"/><path d="M7.500 1.500v12M1.500 7.500h12" stroke="#ececec" stroke-width="0.9"/><path d="M3.600 3.600l7.800 7.800M11.400 3.600l-7.800 7.800" stroke="#ececec" stroke-width="0.500" opacity="0.700"/></g></svg>
<span class="t ls" style="left:31.00px;top:5.30px;font-size:15.00px;line-height:15.00px;color:#2e3436;transform:scaleX(0.9458);transform-origin:0 50%;">Applications</span>
<span class="t ls" style="left:130.00px;top:5.30px;font-size:15.00px;line-height:15.00px;color:#2e3436;transform:scaleX(0.8996);transform-origin:0 50%;">Places</span>
<svg class="a" style="left:193.30px;top:0.80px" width="23.40" height="23.40" viewBox="0 0 24 24"><defs><linearGradient id="fg1" x1="0.75" y1="0.05" x2="0.3" y2="1"><stop offset="0" stop-color="#fff44f"/><stop offset="0.25" stop-color="#ffc934"/><stop offset="0.5" stop-color="#ff8a30"/><stop offset="0.75" stop-color="#ff4f5e"/><stop offset="1" stop-color="#e8138c"/></linearGradient><radialGradient id="fp1" cx="0.6" cy="0.25" r="0.8"><stop offset="0" stop-color="#c060ff"/><stop offset="0.55" stop-color="#8a4cf0"/><stop offset="1" stop-color="#5a3ad8"/></radialGradient><linearGradient id="fh1" x1="0.1" y1="0" x2="0.7" y2="1"><stop offset="0" stop-color="#ffd24a"/><stop offset="1" stop-color="#ff8a2a"/></linearGradient></defs><path d="M15.500 0.200C13.600 1.200 12.200 2.800 11.800 4.600 10.400 4.600 9.200 5.200 8.200 6.200L6.600 4.400 5.300 6.200 3.900 4.200C2.600 6.200 1.900 8 1.600 9.600 0.900 10.800 0.500 12.200 0.500 13.400 0.500 19.400 5.600 23.800 11.900 23.800c6.500 0 11.600-4.600 11.600-11 0-2.600-0.900-5-2.300-6.600 0.300 1.400 0.200 2.600-0.300 3.600C20.300 5.600 17.800 2.600 15.500 0.200z" fill="url(#fg1)"/><circle cx="12" cy="12.700" r="4.700" fill="url(#fp1)"/><path d="M4 9.600C6.200 7.300 10.200 7.200 12.900 9.300 11.500 9.200 10.500 9.600 10 10.400 c1.300 0.100 2.400 0.700 2.900 1.600 -2-0.600-3.900 0.100-4.700 1.700 -0.700 1.500-0.300 3.300 1 4.500 C6 17.600 3.300 14 4 9.600z" fill="url(#fh1)"/></svg>
<svg class="a" style="left:226px;top:2px" width="18" height="21" viewBox="0 0 18 21"><path d="M2.300 0.600h13.400l1.800 2.600v17.300H0.500V3.200z" fill="#6d9ddb" stroke="#3d6db3" stroke-width="1"/><path d="M2.600 1.100h12.800l1.300 2.000H1.300z" fill="#a8c5ec"/><rect x="2.300" y="4.400" width="13.400" height="6.800" fill="#7aa7e0" stroke="#4776bb" stroke-width="0.800"/><rect x="2.300" y="12.600" width="13.400" height="6.800" fill="#7aa7e0" stroke="#4776bb" stroke-width="0.800"/><path d="M5.600 6.200v2.600h6.800V6.200" fill="#f2f2ee" stroke="#6c7077" stroke-width="0.900" stroke-linejoin="round"/><path d="M5.600 14.400v2.600h6.800v-2.600" fill="#f2f2ee" stroke="#6c7077" stroke-width="0.900" stroke-linejoin="round"/><path d="M6.400 6.400h5.200M6.400 14.600h5.200" stroke="#8fb3e6" stroke-width="1"/></svg>
<svg class="a" style="left:254px;top:2px" width="22" height="20" viewBox="0 0 22 20"><rect x="0.500" y="0.500" width="21" height="19" rx="1.200" fill="#c9c9c7" stroke="#8f918e"/><rect x="2.200" y="2.600" width="17.600" height="14.600" fill="#3b423f"/><path d="M4 5l2.500 1.500L4 8" fill="none" stroke="#e8e8e8" stroke-width="1"/><path d="M7.500 10.500h3" stroke="#e8e8e8" stroke-width="1.200"/></svg>
<div class="b" style="left:297.00px;top:1.00px;width:24px;height:24px;background:#f7c81d;overflow:hidden"><div class="b" style="left:2px;top:1px;width:4px;height:4px;border-radius:2px;background:#2c4a8a"></div><div class="b" style="left:17px;top:1px;width:3px;height:4px;border-radius:1.5px;background:#7a86b8"></div><span class="t lf" style="left:1.5px;top:2.5px;font-size:12px;line-height:12px;font-weight:700;color:#1a1400;letter-spacing:-1.1px">M<span style="font-size:8.5px">idas</span></span><div class="b" style="left:2px;top:16.5px;width:6px;height:1px;background:#b59a3c"></div><div class="b" style="left:12.5px;top:15px;width:5px;height:8px;background:#e4483a"></div><div class="b" style="left:14.3px;top:16.5px;width:1.4px;height:5px;background:#8a6a96"></div></div>
<svg class="a" style="left:327px;top:1px" width="24" height="24" viewBox="0 0 24 24"><defs><linearGradient id="camg" x1="0" y1="0" x2="1" y2="0"><stop offset="0" stop-color="#5d6163"/><stop offset="0.5" stop-color="#8b8f91"/><stop offset="1" stop-color="#6f7375"/></linearGradient></defs><rect x="3.700" y="1.700" width="18.800" height="18.200" rx="1.800" fill="#f6f6f6" stroke="#3f6fb5" stroke-width="1.300"/><rect x="4.500" y="2.600" width="17.200" height="3.200" fill="#bdbdbd"/><rect x="10.500" y="4" width="5" height="1.800" fill="#e2e2e2"/><rect x="19.800" y="8.500" width="1.300" height="5" fill="#6ea0e0"/><rect x="5" y="7" width="14" height="11.500" fill="#fdfdfd" stroke="#d0d0d0" stroke-width="0.500"/><rect x="1.500" y="10.500" width="15" height="12" rx="1.600" fill="url(#camg)" stroke="#2f3132" stroke-width="1"/><rect x="3.500" y="9.300" width="3.600" height="1.800" rx="0.500" fill="#cfd2d3" stroke="#3a3c3d" stroke-width="0.500"/><path d="M2.300 16.500h3" stroke="#d8d8d8" stroke-width="0.800"/><circle cx="11" cy="17" r="4.600" fill="#e9eaea" stroke="#55585a" stroke-width="0.800"/><circle cx="11" cy="17" r="3.200" fill="#c4c7c8"/><rect x="9.300" y="15.500" width="3.400" height="3" rx="0.600" fill="#162a52"/><rect x="9.800" y="16" width="2.400" height="0.900" fill="#3f74c8"/><circle cx="15" cy="21.200" r="0.800" fill="#f0a020"/></svg>
<div class="b" style="left:357.00px;top:1.00px;width:24px;height:24px;background:#f7c81d;overflow:hidden"><div class="b" style="left:2px;top:1px;width:4px;height:4px;border-radius:2px;background:#2c4a8a"></div><div class="b" style="left:17px;top:1px;width:3px;height:4px;border-radius:1.5px;background:#7a86b8"></div><span class="t lf" style="left:1.5px;top:2.5px;font-size:12px;line-height:12px;font-weight:700;color:#1a1400;letter-spacing:-1.1px">M<span style="font-size:8.5px">idas</span></span><div class="b" style="left:2px;top:16.5px;width:6px;height:1px;background:#b59a3c"></div><div class="b" style="left:12.5px;top:15px;width:5px;height:8px;background:#e4483a"></div><div class="b" style="left:14.3px;top:16.5px;width:1.4px;height:5px;background:#8a6a96"></div></div>
<div class="b" style="left:387.00px;top:1.00px;width:24px;height:24px;background:#f7c81d;overflow:hidden"><div class="b" style="left:2px;top:1px;width:4px;height:4px;border-radius:2px;background:#2c4a8a"></div><div class="b" style="left:17px;top:1px;width:3px;height:4px;border-radius:1.5px;background:#7a86b8"></div><span class="t lf" style="left:1.5px;top:2.5px;font-size:12px;line-height:12px;font-weight:700;color:#1a1400;letter-spacing:-1.1px">M<span style="font-size:8.5px">idas</span></span><div class="b" style="left:2px;top:16.5px;width:6px;height:1px;background:#b59a3c"></div><div class="b" style="left:12.5px;top:15px;width:5px;height:8px;background:#e4483a"></div><div class="b" style="left:14.3px;top:16.5px;width:1.4px;height:5px;background:#8a6a96"></div></div>
<div class="b" style="left:417.00px;top:1.00px;width:24px;height:24px;background:#f7c81d;overflow:hidden"><div class="b" style="left:2px;top:1px;width:4px;height:4px;border-radius:2px;background:#2c4a8a"></div><div class="b" style="left:17px;top:1px;width:3px;height:4px;border-radius:1.5px;background:#7a86b8"></div><span class="t lf" style="left:1.5px;top:2.5px;font-size:12px;line-height:12px;font-weight:700;color:#1a1400;letter-spacing:-1.1px">M<span style="font-size:8.5px">idas</span></span><div class="b" style="left:2px;top:16.5px;width:6px;height:1px;background:#b59a3c"></div><div class="b" style="left:12.5px;top:15px;width:5px;height:8px;background:#e4483a"></div><div class="b" style="left:14.3px;top:16.5px;width:1.4px;height:5px;background:#8a6a96"></div></div>
<span class="t ls" style="left:463.00px;top:5.30px;font-size:15.00px;line-height:15.00px;color:#2e3436;transform:scaleX(0.9598);transform-origin:0 50%;">Firefox</span>
<div class="b" style="left:1716.00px;top:5.00px;width:16.00px;height:16.00px;background:#ef443b"></div>
<svg class="a" style="left:1716px;top:5px" width="16" height="16" viewBox="0 0 16 16"><path d="M6.200 4.300L9.900 8 6.200 11.700 2.500 8z" fill="#fff"/><path d="M9.700 3.700l1-1L16 8l-5.300 5.300-1-1L14 8z" fill="#fff" transform="translate(-2.300 0)"/></svg>
<span class="t ls" style="left:1748.00px;top:5.30px;font-size:15.00px;line-height:15.00px;color:#2e3436;transform:scaleX(0.9478);transform-origin:0 50%;">Tue 21:22</span>
<svg class="a" style="left:1833px;top:6px" width="15" height="15" viewBox="0 0 15 15"><rect x="5.200" y="0" width="4.600" height="4.600" fill="#2e3436"/><rect x="0" y="10.400" width="4.600" height="4.600" fill="#2e3436"/><rect x="10.400" y="10.400" width="4.600" height="4.600" fill="#2e3436"/><path d="M7.500 4.500v3M2.300 10.500v-3h10.400v3" fill="none" stroke="#2e3436" stroke-width="1.100"/></svg>
<svg class="a" style="left:1861px;top:6px" width="18" height="16" viewBox="0 0 18 16"><path d="M0 4.300h2.500L6.300 0.800v11.700L2.500 9H0z" fill="#2e3436"/><path d="M7.800 4.300c1.100 1.500 1.100 3.200 0 4.700M9.700 2.700c1.800 2.600 1.800 5.400 0 8M11.600 1.200c2.400 3.500 2.400 7.300 0 10.800" fill="none" stroke="#a0a3a1" stroke-width="1"/><path d="M11.600 10.400l4.400 4.400M16 10.400l-4.400 4.400" stroke="#2e3436" stroke-width="1.700"/></svg>
<svg class="a" style="left:1889px;top:4.800px" width="16" height="16" viewBox="0 0 16 16"><path d="M4.800 3.200A6 6 0 1 0 11.200 3.200" fill="none" stroke="#2e3436" stroke-width="1.600" stroke-linecap="round"/><path d="M8 0.800v6.400" stroke="#2e3436" stroke-width="1.600" stroke-linecap="round"/></svg>
<div class="b" style="left:0.00px;top:28.00px;width:1920.00px;height:43.00px;background:#f3f3f3"></div>
<div class="b" style="left:0.00px;top:28.00px;width:1920.00px;height:1.00px;background:#fefefe"></div>
<div class="b" style="left:0.00px;top:29.00px;width:1920.00px;height:1.00px;background:#f7f7f7"></div>
<div class="b" style="left:0.00px;top:71.00px;width:1920.00px;height:1.00px;background:#b4b4b2"></div>
<div class="b" style="left:451.00px;top:31.00px;width:223.00px;height:37.50px;background:#ebebeb;border:1px solid #c4c4cc;border-radius:4px;box-sizing:border-box;box-shadow:0 0 2px rgba(0,0,0,0.18)"></div>
<svg class="a" style="left:10.00px;top:41.50px" width="16" height="16" viewBox="0 0 16 16"><circle cx="8" cy="8" r="7.800" fill="#fff"/><path d="M1.500 10.200L5 9.300 6.800 12.300 8.300 4.300 13.600 3.400" fill="none" stroke="#4fd0e8" stroke-width="1.000" stroke-opacity="0.9" stroke-linejoin="round" stroke-linecap="round"/></svg>
<span class="t ls" style="left:31.50px;top:42.30px;font-size:15.00px;line-height:15.00px;color:#2b2b2e;transform:scaleX(0.9417);transform-origin:0 50%;">Online server</span>
<svg class="a" style="left:201.00px;top:44.00px" width="12" height="12" viewBox="-6 -6 12 12"><path d="M-3.60 -3.60L3.60 3.60M3.60 -3.60L-3.60 3.60" stroke="#2a2a2e" stroke-width="1.00" stroke-linecap="round"/></svg>
<svg class="a" style="left:235.00px;top:41.50px" width="16" height="16" viewBox="0 0 16 16"><circle cx="8" cy="8" r="7.800" fill="#fff"/><path d="M1.500 10.200L5 9.300 6.800 12.300 8.300 4.300 13.600 3.400" fill="none" stroke="#4fd0e8" stroke-width="1.000" stroke-opacity="0.9" stroke-linejoin="round" stroke-linecap="round"/></svg>
<span class="t ls" style="left:256.50px;top:42.30px;font-size:15.00px;line-height:15.00px;color:#2b2b2e;transform:scaleX(0.9417);transform-origin:0 50%;">Online server</span>
<svg class="a" style="left:426.00px;top:44.00px" width="12" height="12" viewBox="-6 -6 12 12"><path d="M-3.60 -3.60L3.60 3.60M3.60 -3.60L-3.60 3.60" stroke="#2a2a2e" stroke-width="1.00" stroke-linecap="round"/></svg>
<svg class="a" style="left:460.00px;top:41.50px" width="16" height="16" viewBox="0 0 16 16"><circle cx="8" cy="8" r="7.800" fill="#fff"/><path d="M1.500 10.200L5 9.300 6.800 12.300 8.300 4.300 13.600 3.400" fill="none" stroke="#4fd0e8" stroke-width="1.000" stroke-opacity="0.9" stroke-linejoin="round" stroke-linecap="round"/></svg>
<span class="t ls" style="left:481.50px;top:42.30px;font-size:15.00px;line-height:15.00px;color:#2b2b2e;transform:scaleX(0.9417);transform-origin:0 50%;">Online server</span>
<svg class="a" style="left:651.00px;top:44.00px" width="12" height="12" viewBox="-6 -6 12 12"><path d="M-3.60 -3.60L3.60 3.60M3.60 -3.60L-3.60 3.60" stroke="#2a2a2e" stroke-width="1.00" stroke-linecap="round"/></svg>
<svg class="a" style="left:685.00px;top:41.50px" width="16" height="16" viewBox="0 0 16 16"><circle cx="8" cy="8" r="7.800" fill="#fff"/><path d="M1.500 10.200L5 9.300 6.800 12.300 8.300 4.300 13.600 3.400" fill="none" stroke="#4fd0e8" stroke-width="1.000" stroke-opacity="0.9" stroke-linejoin="round" stroke-linecap="round"/></svg>
<span class="t ls" style="left:706.50px;top:42.30px;font-size:15.00px;line-height:15.00px;color:#2b2b2e;transform:scaleX(0.9417);transform-origin:0 50%;">Online server</span>
<svg class="a" style="left:876.00px;top:44.00px" width="12" height="12" viewBox="-6 -6 12 12"><path d="M-3.60 -3.60L3.60 3.60M3.60 -3.60L-3.60 3.60" stroke="#2a2a2e" stroke-width="1.00" stroke-linecap="round"/></svg>
<svg class="a" style="left:910.00px;top:41.50px" width="16" height="16" viewBox="0 0 16 16"><circle cx="8" cy="8" r="7.800" fill="#fff"/><path d="M1.500 10.200L5 9.300 6.800 12.300 8.300 4.300 13.600 3.400" fill="none" stroke="#4fd0e8" stroke-width="1.000" stroke-opacity="0.9" stroke-linejoin="round" stroke-linecap="round"/></svg>
<span class="t ls" style="left:931.50px;top:42.30px;font-size:15.00px;line-height:15.00px;color:#2b2b2e;transform:scaleX(0.9417);transform-origin:0 50%;">Online server</span>
<svg class="a" style="left:1101.00px;top:44.00px" width="12" height="12" viewBox="-6 -6 12 12"><path d="M-3.60 -3.60L3.60 3.60M3.60 -3.60L-3.60 3.60" stroke="#2a2a2e" stroke-width="1.00" stroke-linecap="round"/></svg>
<svg class="a" style="left:1138px;top:44px" width="14" height="14" viewBox="0 0 14 14"><path d="M7 1v12M1 7h12" stroke="#1c1c1e" stroke-width="1.300"/></svg>
<div class="b" style="left:1830.00px;top:52.00px;width:8.00px;height:1.50px;background:#2e3436"></div>
<svg class="a" style="left:1864px;top:46px" width="8" height="8" viewBox="0 0 8 8"><rect x="1.700" y="2" width="4.400" height="4.400" fill="#f4f4f4" stroke="#2e3436" stroke-width="2"/></svg>
<svg class="a" style="left:1896.00px;top:44.00px" width="12" height="12" viewBox="-6 -6 12 12"><path d="M-3.40 -3.40L3.40 3.40M3.40 -3.40L-3.40 3.40" stroke="#2e3436" stroke-width="1.80" stroke-linecap="round"/></svg>
<div class="b" style="left:0.00px;top:72.00px;width:1920.00px;height:40.00px;background:#ebebeb"></div>
<div class="b" style="left:0.00px;top:112.00px;width:1920.00px;height:1.00px;background:#bdbdbb"></div>
<svg class="a" style="left:15px;top:84.600px" width="17" height="16" viewBox="0 0 17 16"><path d="M15.500 8H2.200M8 2.200L2.200 8 8 13.800" fill="none" stroke="#1c1c1e" stroke-width="1.350" stroke-linecap="round" stroke-linejoin="round"/></svg>
<svg class="a" style="left:51px;top:84.600px" width="17" height="16" viewBox="0 0 17 16"><path d="M1.500 8h13.300M9 2.200L14.800 8 9 13.800" fill="none" stroke="#9b9b9d" stroke-width="1.350" stroke-linecap="round" stroke-linejoin="round"/></svg>
<svg class="a" style="left:88px;top:84.600px" width="16" height="16" viewBox="0 0 16 16"><path d="M13.900 8.600A6.200 6.200 0 1 1 12.100 3.700" fill="none" stroke="#1c1c1e" stroke-width="1.350" stroke-linecap="round"/><path d="M13.900 1.300v4.200h-4.200z" fill="#1c1c1e" stroke="#1c1c1e" stroke-width="0.600" stroke-linejoin="round"/></svg>
<div class="b" style="left:231.00px;top:76.00px;width:1494.00px;height:32.00px;background:#fff;border:1px solid #b9b9b7;border-radius:4px;box-sizing:border-box"></div>
<svg class="a" style="left:238px;top:83px" width="18" height="18" viewBox="0 0 18 18"><path d="M9 1.600L15.400 4.500c0.200 4.800-1.900 9.200-6.400 11.900C4.500 13.700 2.400 9.300 2.600 4.500z" fill="none" stroke="#1c1c1e" stroke-width="1.350" stroke-linejoin="round"/></svg>
<svg class="a" style="left:268px;top:84px" width="14" height="16" viewBox="0 0 14 16"><path d="M2.800 1h5.700l4 4v8.700c0 0.700-0.500 1.300-1.300 1.300H2.800c-0.700 0-1.300-0.500-1.300-1.300V2.300C1.500 1.500 2 1 2.800 1z" fill="none" stroke="#1c1c1e" stroke-width="1.350" stroke-linejoin="round"/><path d="M8.300 1.200l4 4H8.300z" fill="#1c1c1e"/></svg>
<span class="t ls" style="left:293.00px;top:84.30px;font-size:15.00px;line-height:15.00px;color:#1c1c1e;transform:scaleX(1.0473);transform-origin:0 50%;">localhost</span>
<span class="t ls" style="left:355.50px;top:84.30px;font-size:15.00px;line-height:15.00px;color:#7a7a7d;transform:scaleX(0.9724);transform-origin:0 50%;">:8085</span>
<div class="b" style="left:1652.00px;top:82.00px;width:37.00px;height:20.00px;background:#e3e3e3;border-radius:3px"></div>
<span class="t ls" style="left:1658.50px;top:86.42px;font-size:12.50px;line-height:12.50px;color:#1c1c1e;transform:scaleX(0.9593);transform-origin:0 50%;">80%</span>
<svg class="a" style="left:1700px;top:83px" width="18" height="18" viewBox="0 0 18 18"><path d="M9 1.200l2.350 5.100 5.550 0.600-4.150 3.750 1.150 5.500L9 13.350 4.100 16.150l1.150-5.500L1.100 6.900l5.550-0.600z" fill="#4489e0" stroke="#4489e0" stroke-width="0.800" stroke-linejoin="round"/></svg>
<svg class="a" style="left:1852px;top:85px" width="16" height="14" viewBox="0 0 16 14"><path d="M1.500 1.500L7 7l-5.500 5.500M8 1.500L13.500 7 8 12.500" fill="none" stroke="#1c1c1e" stroke-width="1.300" stroke-linecap="round" stroke-linejoin="round"/></svg>
<svg class="a" style="left:1889px;top:85px" width="14" height="13" viewBox="0 0 14 13"><path d="M0.700 2.100h12.300M0.700 6.500h12.300M0.700 10.900h12.300" stroke="#2a2a2e" stroke-width="1.150"/></svg>
<div class="b" style="left:0.00px;top:1041.00px;width:1920.00px;height:1.00px;background:#cfcfe0"></div>
<div class="b" style="left:0.00px;top:1042.00px;width:1920.00px;height:1.00px;background:#5e5e5e"></div>
<div class="b" style="left:0.00px;top:1043.00px;width:1920.00px;height:37.00px;background:linear-gradient(#efefef,#e6e6e6)"></div>
<div class="b" style="left:5.30px;top:1048.00px;width:29.20px;height:26.50px;border:1px solid #c3c3c1;border-radius:3px;box-sizing:border-box;background:linear-gradient(#f4f4f4,#ececec)"></div>
<svg class="a" style="left:12px;top:1054px" width="16" height="16" viewBox="0 0 16 16"><rect x="2" y="8.700" width="5.800" height="5" fill="#f2f2f2" stroke="#2e3436" stroke-width="2"/><rect x="8.400" y="2" width="5.500" height="5.800" fill="#f2f2f2" stroke="#2e3436" stroke-width="2"/></svg>
<div class="b" style="left:39.30px;top:1046.00px;width:263.70px;height:30.60px;border:1px solid #bcbcba;border-radius:3.5px;box-sizing:border-box;background:linear-gradient(#c6c6c6,#d1d1d1 30%,#d3d3d3)"></div>
<svg class="a" style="left:46.00px;top:1050.00px" width="23.00" height="23.00" viewBox="0 0 24 24"><defs><linearGradient id="fg2" x1="0.75" y1="0.05" x2="0.3" y2="1"><stop offset="0" stop-color="#fff44f"/><stop offset="0.25" stop-color="#ffc934"/><stop offset="0.5" stop-color="#ff8a30"/><stop offset="0.75" stop-color="#ff4f5e"/><stop offset="1" stop-color="#e8138c"/></linearGradient><radialGradient id="fp2" cx="0.6" cy="0.25" r="0.8"><stop offset="0" stop-color="#c060ff"/><stop offset="0.55" stop-color="#8a4cf0"/><stop offset="1" stop-color="#5a3ad8"/></radialGradient><linearGradient id="fh2" x1="0.1" y1="0" x2="0.7" y2="1"><stop offset="0" stop-color="#ffd24a"/><stop offset="1" stop-color="#ff8a2a"/></linearGradient></defs><path d="M15.500 0.200C13.600 1.200 12.200 2.800 11.800 4.600 10.400 4.600 9.200 5.200 8.200 6.200L6.600 4.400 5.300 6.200 3.900 4.200C2.600 6.200 1.900 8 1.600 9.600 0.900 10.800 0.500 12.200 0.500 13.400 0.500 19.400 5.600 23.800 11.900 23.800c6.500 0 11.600-4.600 11.600-11 0-2.600-0.900-5-2.300-6.600 0.300 1.400 0.200 2.600-0.300 3.600C20.300 5.600 17.800 2.600 15.500 0.200z" fill="url(#fg2)"/><circle cx="12" cy="12.700" r="4.700" fill="url(#fp2)"/><path d="M4 9.600C6.200 7.300 10.200 7.200 12.900 9.300 11.500 9.200 10.500 9.600 10 10.400 c1.300 0.100 2.400 0.700 2.900 1.600 -2-0.600-3.900 0.100-4.700 1.700 -0.700 1.500-0.300 3.300 1 4.500 C6 17.600 3.300 14 4 9.600z" fill="url(#fh2)"/></svg>
<span class="t ls" style="left:74.00px;top:1055.23px;font-size:14.50px;line-height:14.50px;color:#2e3436;transform:scaleX(0.9073);transform-origin:0 50%;">Online server — Mozilla Firefox</span>
<div class="b" style="left:307.00px;top:1046.00px;width:264.00px;height:30.60px;border:1px solid #c3c3c1;border-radius:3px;box-sizing:border-box;background:linear-gradient(#f6f6f6,#ebebeb)"></div>
<svg class="a" style="left:315.00px;top:1052.00px;opacity:0.55" width="22" height="20" viewBox="0 0 22 20"><rect x="0.500" y="0.500" width="21" height="19" rx="1.200" fill="#c4c5c2" stroke="#8f918e"/><rect x="2.200" y="2.600" width="17.600" height="14.600" fill="#2f3634"/><path d="M4 5l2 1.200L4 7.400" fill="none" stroke="#e8e8e8" stroke-width="0.900"/><path d="M7 8.800h2.500" stroke="#e8e8e8" stroke-width="1"/></svg>
<span class="t ls" style="left:342.00px;top:1055.23px;font-size:14.50px;line-height:14.50px;color:#8f9292;transform:scaleX(0.8992);transform-origin:0 50%;">[pi@nnrpi1: ~/Programs/caenlogger]</span>
<div class="b" style="left:575.00px;top:1046.00px;width:263.00px;height:30.60px;border:1px solid #c3c3c1;border-radius:3px;box-sizing:border-box;background:linear-gradient(#f6f6f6,#ebebeb)"></div>
<svg class="a" style="left:583.00px;top:1052.00px;opacity:0.55" width="22" height="20" viewBox="0 0 22 20"><rect x="0.500" y="0.500" width="21" height="19" rx="1.200" fill="#c4c5c2" stroke="#8f918e"/><rect x="2.200" y="2.600" width="17.600" height="14.600" fill="#2f3634"/><path d="M4 5l2 1.200L4 7.400" fill="none" stroke="#e8e8e8" stroke-width="0.900"/><path d="M7 8.800h2.500" stroke="#e8e8e8" stroke-width="1"/></svg>
<span class="t ls" style="left:610.00px;top:1055.23px;font-size:14.50px;line-height:14.50px;color:#8f9292;transform:scaleX(0.8782);transform-origin:0 50%;">[npg@carme-gsi:~/Programs/caenlo...</span>
<div class="b" style="left:842.00px;top:1046.00px;width:263.00px;height:30.60px;border:1px solid #c3c3c1;border-radius:3px;box-sizing:border-box;background:linear-gradient(#f6f6f6,#ebebeb)"></div>
<div class="b" style="left:851.00px;top:1053.00px;width:20.00px;height:18.00px;background:#f3f3f3;border:1px solid #e3e3e3;box-sizing:border-box;border-radius:2px"></div>
<span class="t ls" style="left:877.00px;top:1055.23px;font-size:14.50px;line-height:14.50px;color:#8f9292;transform:scaleX(0.9177);transform-origin:0 50%;">[Gnuplot]</span>
<div class="b" style="left:1109.00px;top:1046.00px;width:263.00px;height:30.60px;border:1px solid #c3c3c1;border-radius:3px;box-sizing:border-box;background:linear-gradient(#f6f6f6,#ebebeb)"></div>
<svg class="a" style="left:1117.00px;top:1052.00px;opacity:1" width="22" height="20" viewBox="0 0 22 20"><rect x="0.500" y="0.500" width="21" height="19" rx="1.200" fill="#c4c5c2" stroke="#8f918e"/><rect x="2.200" y="2.600" width="17.600" height="14.600" fill="#2f3634"/><path d="M4 5l2 1.200L4 7.400" fill="none" stroke="#e8e8e8" stroke-width="0.900"/><path d="M7 8.800h2.500" stroke="#e8e8e8" stroke-width="1"/></svg>
<span class="t ls" style="left:1144.00px;top:1055.23px;font-size:14.50px;line-height:14.50px;color:#2e3436;transform:scaleX(0.8626);transform-origin:0 50%;">npg@carme-gsi:~/Programs/CARME...</span>
<div class="b" style="left:1568.00px;top:1048.30px;width:54.00px;height:26.00px;border:2px solid #d2d2d2;box-sizing:border-box;border-radius:3px;background:#ebebeb"></div>
<div class="b" style="left:1625.00px;top:1048.30px;width:54.00px;height:26.00px;border:2px solid #d2d2d2;box-sizing:border-box;border-radius:3px;background:#ebebeb"></div>
<div class="b" style="left:1682.00px;top:1048.30px;width:54.00px;height:26.00px;border:2px solid #d2d2d2;box-sizing:border-box;border-radius:3px;background:#ebebeb"></div>
<div class="b" style="left:1739.00px;top:1048.30px;width:54.00px;height:26.00px;border:2px solid #d2d2d2;box-sizing:border-box;border-radius:3px;background:#ebebeb"></div>
<div class="b" style="left:1796.00px;top:1048.30px;width:54.00px;height:26.00px;border:2px solid #8a8a8a;box-sizing:border-box;border-radius:2px;background:#f5f5f3"></div>
<div class="b" style="left:1853.00px;top:1048.30px;width:54.00px;height:26.00px;border:2px solid #d2d2d2;box-sizing:border-box;border-radius:3px;background:#ebebeb"></div>
<div class="b" style="left:1570.00px;top:1050.30px;width:50.00px;height:12.00px;background:#dedede"></div>
<div class="b" style="left:1599.00px;top:1050.30px;width:20.00px;height:11.50px;background:#eeeeee;border:1px solid #cdcdcd;box-sizing:border-box"></div>
<div class="b" style="left:1570.00px;top:1063.30px;width:49.50px;height:1.00px;background:#d0d0d0"></div>
</body></html>
